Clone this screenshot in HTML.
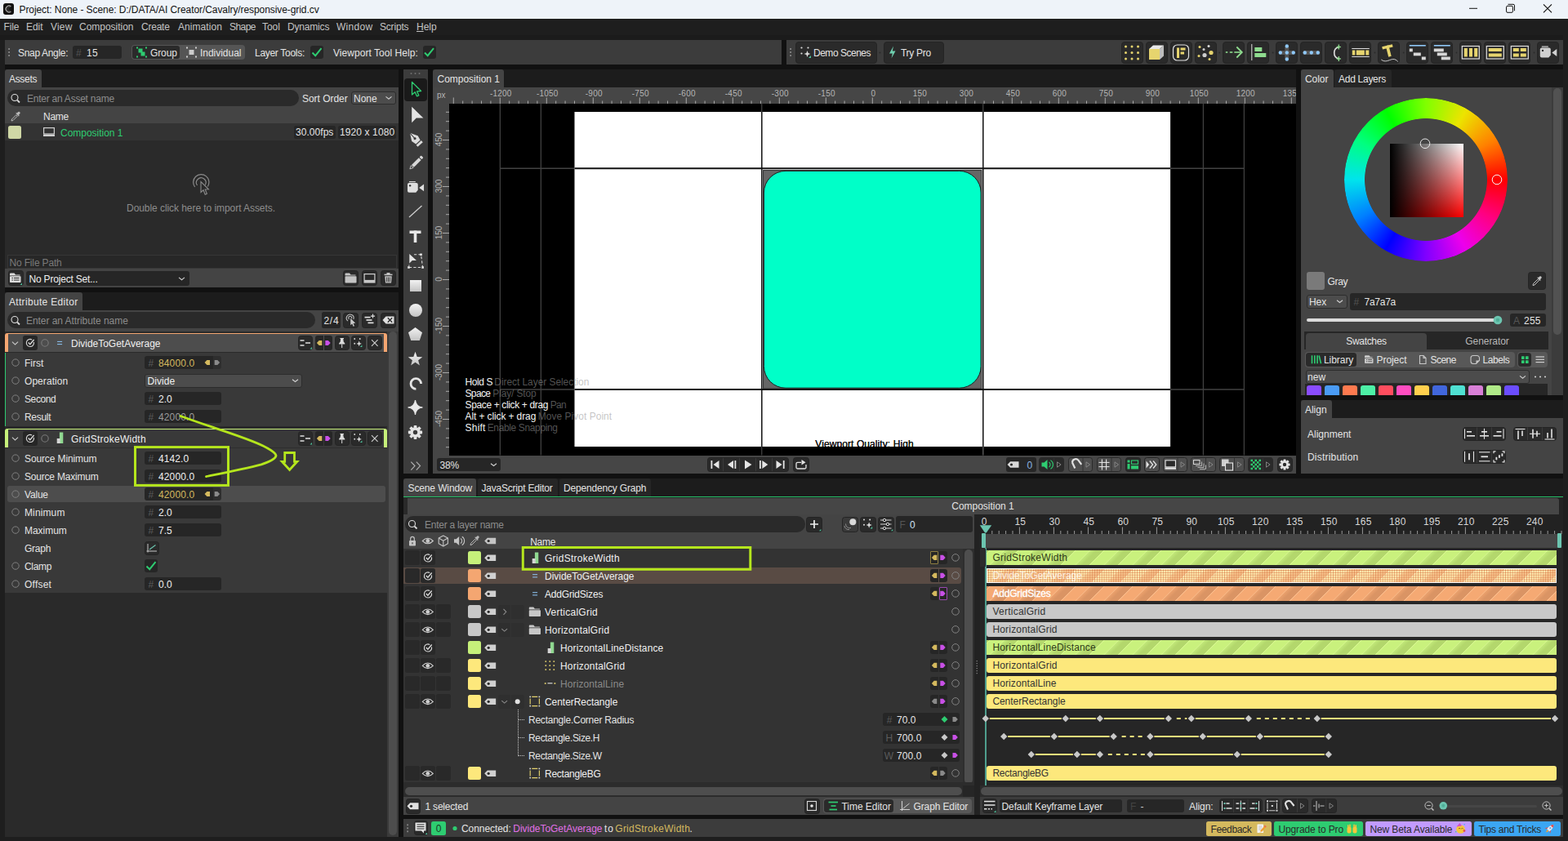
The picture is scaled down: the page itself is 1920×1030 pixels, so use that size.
<!DOCTYPE html>
<html lang="en"><head><meta charset="utf-8"><title>Cavalry - responsive-grid.cv</title>
<style>
html,body{margin:0;padding:0;background:#1e1e1e;}
body{width:1920px;height:1030px;position:relative;overflow:hidden;font-family:"Liberation Sans", sans-serif;font-size:12px;}
#root{position:absolute;left:0;top:0;width:1920px;height:1030px;overflow:hidden;}
#root div{position:absolute;box-sizing:border-box;}
.t{position:absolute;display:block;}
svg.ov{position:absolute;left:0;top:0;width:1920px;height:1030px;pointer-events:none;}
</style></head><body><div id="root">
<div style="left:0px;top:0px;width:1920px;height:23px;background:#eef3f9;"></div>
<span class="t" style="top:4.5px;line-height:14px;font-size:12px;color:#111;white-space:nowrap;letter-spacing:-0.078px;left:23.5px;">Project: None - Scene: D:/DATA/AI Creator/Cavalry/responsive-grid.cv</span>
<div style="left:0px;top:23px;width:1920px;height:26px;background:#1e1e1e;"></div>
<div style="left:0px;top:43px;width:1920px;height:6px;background:#1b1b1b;"></div>
<span class="t" style="top:26.0px;line-height:14px;font-size:12px;color:#c4c4c4;white-space:nowrap;letter-spacing:-0.174px;left:4.5px;">File</span>
<span class="t" style="top:26.0px;line-height:14px;font-size:12px;color:#c4c4c4;white-space:nowrap;letter-spacing:-0.065px;left:32px;">Edit</span>
<span class="t" style="top:26.0px;line-height:14px;font-size:12px;color:#c4c4c4;white-space:nowrap;letter-spacing:0.173px;left:62px;">View</span>
<span class="t" style="top:26.0px;line-height:14px;font-size:12px;color:#c4c4c4;white-space:nowrap;letter-spacing:-0.018px;left:97px;">Composition</span>
<span class="t" style="top:26.0px;line-height:14px;font-size:12px;color:#c4c4c4;white-space:nowrap;letter-spacing:-0.224px;left:173px;">Create</span>
<span class="t" style="top:26.0px;line-height:14px;font-size:12px;color:#c4c4c4;white-space:nowrap;letter-spacing:0.059px;left:218px;">Animation</span>
<span class="t" style="top:26.0px;line-height:14px;font-size:12px;color:#c4c4c4;white-space:nowrap;letter-spacing:-0.561px;left:281px;">Shape</span>
<span class="t" style="top:26.0px;line-height:14px;font-size:12px;color:#c4c4c4;white-space:nowrap;letter-spacing:-0.036px;left:321px;">Tool</span>
<span class="t" style="top:26.0px;line-height:14px;font-size:12px;color:#c4c4c4;white-space:nowrap;letter-spacing:-0.183px;left:352px;">Dynamics</span>
<span class="t" style="top:26.0px;line-height:14px;font-size:12px;color:#c4c4c4;white-space:nowrap;letter-spacing:0.292px;left:412px;">Window</span>
<span class="t" style="top:26.0px;line-height:14px;font-size:12px;color:#c4c4c4;white-space:nowrap;letter-spacing:-0.192px;left:465px;">Scripts</span>
<span class="t" style="top:26.0px;line-height:14px;font-size:12px;color:#c4c4c4;white-space:nowrap;letter-spacing:-0.007px;left:510px;"><u>H</u>elp</span>
<div style="left:6px;top:79px;width:1908px;height:946px;background:#111111;"></div>
<div style="left:6px;top:49px;width:951px;height:30px;background:#3c3c3c;"></div>
<div style="left:957px;top:49px;width:6px;height:30px;background:#111111;"></div>
<span class="t" style="top:57.8px;line-height:14px;font-size:12px;color:#e4e4e4;white-space:nowrap;letter-spacing:-0.322px;left:22px;">Snap Angle:</span>
<div style="left:89px;top:56px;width:60px;height:16px;background:#262626;border-radius:3px;"></div>
<span class="t" style="top:57.8px;line-height:14px;font-size:12px;color:#555;white-space:nowrap;left:93px;">#</span>
<span class="t" style="top:57.8px;line-height:14px;font-size:12px;color:#e4e4e4;white-space:nowrap;letter-spacing:0.226px;left:106px;">15</span>
<div style="left:161px;top:55px;width:139px;height:18px;background:#555;border-radius:4px;"></div>
<div style="left:162px;top:56px;width:58px;height:16px;background:#2a2a2a;border-radius:3px;"></div>
<span class="t" style="top:57.8px;line-height:14px;font-size:12px;color:#e4e4e4;white-space:nowrap;letter-spacing:-0.122px;left:184px;">Group</span>
<span class="t" style="top:57.8px;line-height:14px;font-size:12px;color:#e4e4e4;white-space:nowrap;letter-spacing:-0.028px;left:245px;">Individual</span>
<span class="t" style="top:57.8px;line-height:14px;font-size:12px;color:#e4e4e4;white-space:nowrap;letter-spacing:-0.294px;left:312px;">Layer Tools:</span>
<div style="left:380px;top:56px;width:16px;height:16px;background:#262626;border-radius:3px;"></div>
<span class="t" style="top:57.8px;line-height:14px;font-size:12px;color:#e4e4e4;white-space:nowrap;letter-spacing:0.043px;left:408px;">Viewport Tool Help:</span>
<div style="left:517.5px;top:56px;width:16.0px;height:16px;background:#262626;border-radius:3px;"></div>
<div style="left:963px;top:49px;width:951px;height:30px;background:#3c3c3c;"></div>
<div style="left:974px;top:51px;width:99.5px;height:26.5px;background:#2a2a2a;border-radius:4px;border:1px solid #242424;"></div>
<span class="t" style="top:57.8px;line-height:14px;font-size:12px;color:#e4e4e4;white-space:nowrap;letter-spacing:-0.486px;left:996px;">Demo Scenes</span>
<div style="left:1081.5px;top:51px;width:74.5px;height:26.5px;background:#2a2a2a;border-radius:4px;border:1px solid #242424;"></div>
<span class="t" style="top:57.8px;line-height:14px;font-size:12px;color:#e4e4e4;white-space:nowrap;letter-spacing:-0.292px;left:1103px;">Try Pro</span>
<div style="left:1372.5px;top:51px;width:27.0px;height:26.5px;background:#2a2a2a;border-radius:4px;border:1px solid #242424;"></div>
<div style="left:1402.5px;top:51px;width:27.0px;height:26.5px;background:#2a2a2a;border-radius:4px;border:1px solid #242424;"></div>
<div style="left:1432.5px;top:51px;width:27.0px;height:26.5px;background:#2a2a2a;border-radius:4px;border:1px solid #242424;"></div>
<div style="left:1462.5px;top:51px;width:27.0px;height:26.5px;background:#2a2a2a;border-radius:4px;border:1px solid #242424;"></div>
<div style="left:1497.3px;top:51px;width:27.0px;height:26.5px;background:#2a2a2a;border-radius:4px;border:1px solid #242424;"></div>
<div style="left:1527.3px;top:51px;width:27.0px;height:26.5px;background:#2a2a2a;border-radius:4px;border:1px solid #242424;"></div>
<div style="left:1562.3px;top:51px;width:27.0px;height:26.5px;background:#2a2a2a;border-radius:4px;border:1px solid #242424;"></div>
<div style="left:1592.3px;top:51px;width:27.0px;height:26.5px;background:#2a2a2a;border-radius:4px;border:1px solid #242424;"></div>
<div style="left:1622.3px;top:51px;width:27.0px;height:26.5px;background:#2a2a2a;border-radius:4px;border:1px solid #242424;"></div>
<div style="left:1652.3px;top:51px;width:27.0px;height:26.5px;background:#2a2a2a;border-radius:4px;border:1px solid #242424;"></div>
<div style="left:1687.3px;top:51px;width:27.0px;height:26.5px;background:#2a2a2a;border-radius:4px;border:1px solid #242424;"></div>
<div style="left:1722.3px;top:51px;width:27.0px;height:26.5px;background:#2a2a2a;border-radius:4px;border:1px solid #242424;"></div>
<div style="left:1752.3px;top:51px;width:27.0px;height:26.5px;background:#2a2a2a;border-radius:4px;border:1px solid #242424;"></div>
<div style="left:1787.3px;top:51px;width:27.0px;height:26.5px;background:#2a2a2a;border-radius:4px;border:1px solid #242424;"></div>
<div style="left:1817.3px;top:51px;width:27.0px;height:26.5px;background:#2a2a2a;border-radius:4px;border:1px solid #242424;"></div>
<div style="left:1847.3px;top:51px;width:27.0px;height:26.5px;background:#2a2a2a;border-radius:4px;border:1px solid #242424;"></div>
<div style="left:1882.3px;top:51px;width:27.0px;height:26.5px;background:#2a2a2a;border-radius:4px;border:1px solid #242424;"></div>
<div style="left:6px;top:85px;width:482px;height:22px;background:#1c1c1c;"></div>
<div style="left:6px;top:85px;width:45px;height:23px;background:#444444;border-radius:3px 3px 0 0;"></div>
<span class="t" style="top:89.5px;line-height:14px;font-size:12px;color:#e4e4e4;white-space:nowrap;letter-spacing:-0.324px;left:11px;">Assets</span>
<div style="left:6px;top:107px;width:482px;height:245px;background:#2a2a2a;"></div>
<div style="left:6px;top:107px;width:482px;height:44px;background:#444444;"></div>
<div style="left:9px;top:110px;width:357px;height:20px;background:#2a2a2a;border-radius:10px;"></div>
<span class="t" style="top:113.5px;line-height:14px;font-size:12px;color:#8c8c8c;white-space:nowrap;letter-spacing:-0.241px;left:33px;">Enter an Asset name</span>
<span class="t" style="top:113.5px;line-height:14px;font-size:12px;color:#e4e4e4;white-space:nowrap;letter-spacing:-0.035px;left:370px;">Sort Order</span>
<div style="left:430px;top:111.5px;width:54.5px;height:16.5px;background:#4c4c4c;border-radius:3px;border:1px solid #2c2c2c;"></div>
<span class="t" style="top:113.5px;line-height:14px;font-size:12px;color:#e4e4e4;white-space:nowrap;letter-spacing:-0.026px;left:433px;">None</span>
<span class="t" style="top:135.5px;line-height:14px;font-size:12px;color:#e4e4e4;white-space:nowrap;letter-spacing:-0.277px;left:53px;">Name</span>
<div style="left:6px;top:151px;width:482px;height:21.4px;background:#333333;"></div>
<div style="left:10px;top:154px;width:16px;height:16px;background:#d0d8a6;border-radius:2.5px;"></div>
<span class="t" style="top:155.5px;line-height:14px;font-size:12px;color:#2ecc71;white-space:nowrap;letter-spacing:-0.019px;left:74px;">Composition 1</span>
<div style="left:360px;top:153.5px;width:50.5px;height:16.5px;background:#262626;border-radius:2.5px;"></div>
<span class="t" style="top:155.0px;line-height:14px;font-size:12px;color:#e4e4e4;white-space:nowrap;letter-spacing:0.047px;left:362px;">30.00fps</span>
<div style="left:414px;top:153.5px;width:70.5px;height:16.5px;background:#262626;border-radius:2.5px;"></div>
<span class="t" style="top:155.0px;line-height:14px;font-size:12px;color:#e4e4e4;white-space:nowrap;letter-spacing:0.107px;left:416px;">1920 x 1080</span>
<span class="t" style="top:248.0px;line-height:14px;font-size:12px;color:#8c8c8c;white-space:nowrap;letter-spacing:-0.062px;left:46px;width:400px;text-align:center;">Double click here to import Assets.</span>
<div style="left:9px;top:312px;width:476.5px;height:17px;background:#272727;border:1px solid #363636;"></div>
<span class="t" style="top:314.5px;line-height:14px;font-size:12px;color:#7a7a7a;white-space:nowrap;letter-spacing:-0.159px;left:11.5px;">No File Path</span>
<div style="left:6px;top:329px;width:482px;height:23px;background:#444444;"></div>
<div style="left:9.5px;top:331px;width:19.0px;height:19px;background:#2a2a2a;border-radius:3.5px;border:1px solid #242424;"></div>
<div style="left:32px;top:332px;width:199.5px;height:17.5px;background:#262626;border-radius:3px;"></div>
<span class="t" style="top:334.5px;line-height:14px;font-size:12px;color:#f0f0f0;white-space:nowrap;letter-spacing:-0.192px;left:35.5px;">No Project Set...</span>
<div style="left:420px;top:331px;width:19px;height:19px;background:#2a2a2a;border-radius:3.5px;border:1px solid #242424;"></div>
<div style="left:443px;top:331px;width:19px;height:19px;background:#2a2a2a;border-radius:3.5px;border:1px solid #242424;"></div>
<div style="left:466px;top:331px;width:19px;height:19px;background:#2a2a2a;border-radius:3.5px;border:1px solid #242424;"></div>
<div style="left:6px;top:358px;width:482px;height:22px;background:#1c1c1c;"></div>
<div style="left:6px;top:358px;width:94.5px;height:23px;background:#444444;border-radius:3px 3px 0 0;"></div>
<span class="t" style="top:362.5px;line-height:14px;font-size:12px;color:#e4e4e4;white-space:nowrap;letter-spacing:0.317px;left:11px;">Attribute Editor</span>
<div style="left:6px;top:380px;width:482px;height:645px;background:#2a2a2a;"></div>
<div style="left:6px;top:380px;width:482px;height:26px;background:#444444;"></div>
<div style="left:9px;top:382px;width:377px;height:20px;background:#2a2a2a;border-radius:10px;"></div>
<span class="t" style="top:385.5px;line-height:14px;font-size:12px;color:#8c8c8c;white-space:nowrap;letter-spacing:-0.056px;left:32px;">Enter an Attribute name</span>
<div style="left:394px;top:382px;width:22.5px;height:19.5px;background:#262626;border-radius:2.5px;"></div>
<span class="t" style="top:385.5px;line-height:14px;font-size:12px;color:#e4e4e4;white-space:nowrap;letter-spacing:0.7px;left:396.5px;">2/4</span>
<div style="left:420px;top:382.5px;width:19px;height:19.0px;background:#2a2a2a;border-radius:3.5px;border:1px solid #242424;"></div>
<div style="left:443px;top:382.5px;width:19px;height:19.0px;background:#2a2a2a;border-radius:3.5px;border:1px solid #242424;"></div>
<div style="left:466px;top:382.5px;width:19px;height:19.0px;background:#2a2a2a;border-radius:3.5px;border:1px solid #242424;"></div>
<div style="left:474px;top:406px;width:14px;height:619px;background:#3a3a3a;"></div>
<div style="left:475.5px;top:405.5px;width:10.0px;height:617.5px;background:#4d4d4d;border-radius:5px;"></div>
<div style="left:6px;top:408px;width:468px;height:23px;background:#4d4d4d;border-radius:3px 3px 0 0;border-left:4px solid #f4a671;border-right:4px solid #f4a671;border-top:1px solid #f4a671;"></div>
<div style="left:28px;top:411px;width:18px;height:17.5px;background:#262626;border-radius:3px;"></div>
<span class="t" style="top:414.2px;line-height:14px;font-size:12px;color:#f0f0f0;white-space:nowrap;letter-spacing:-0.019px;left:87px;">DivideToGetAverage</span>
<div style="left:365px;top:411px;width:18px;height:17.5px;background:#2a2a2a;border-radius:3.5px;border:1px solid #242424;"></div>
<div style="left:386px;top:411px;width:10px;height:17.5px;background:#262626;border-radius:3px 0 0 3px;"></div>
<div style="left:396.5px;top:411px;width:10.0px;height:17.5px;background:#262626;border-radius:0 3px 3px 0;"></div>
<div style="left:410px;top:411px;width:17.5px;height:17.5px;background:#2a2a2a;border-radius:3.5px;border:1px solid #242424;"></div>
<div style="left:430px;top:411px;width:17.5px;height:17.5px;background:#2a2a2a;border-radius:3.5px;border:1px solid #242424;"></div>
<div style="left:450px;top:411px;width:17.5px;height:17.5px;background:#2a2a2a;border-radius:3.5px;border:1px solid #242424;"></div>
<div style="left:6px;top:431.5px;width:468px;height:90.0px;background:#393939;"></div>
<div style="left:6px;top:431.5px;width:1.3px;height:90.0px;background:#2ecc71;"></div>
<span class="t" style="top:437.7px;line-height:14px;font-size:12px;color:#e4e4e4;white-space:nowrap;letter-spacing:-0.009px;left:30px;">First</span>
<div style="left:177px;top:436px;width:83.8px;height:16px;background:#262626;border-radius:3px 0 0 3px;"></div>
<div style="left:260.8px;top:436px;width:10.2px;height:16px;background:#2e2e2e;border-radius:0 3px 3px 0;"></div>
<span class="t" style="top:437.8px;line-height:14px;font-size:12px;color:#5c5c5c;white-space:nowrap;left:181.5px;">#</span>
<span class="t" style="top:437.8px;line-height:14px;font-size:12px;color:#d4b95e;white-space:nowrap;letter-spacing:0.119px;left:194px;">84000.0</span>
<span class="t" style="top:459.7px;line-height:14px;font-size:12px;color:#e4e4e4;white-space:nowrap;letter-spacing:0.055px;left:30px;">Operation</span>
<div style="left:177px;top:458px;width:193px;height:16.5px;background:#4c4c4c;border-radius:3px;border:1px solid #2c2c2c;"></div>
<span class="t" style="top:459.5px;line-height:14px;font-size:12px;color:#f0f0f0;white-space:nowrap;letter-spacing:0.061px;left:180.5px;">Divide</span>
<span class="t" style="top:481.7px;line-height:14px;font-size:12px;color:#e4e4e4;white-space:nowrap;letter-spacing:-0.388px;left:30px;">Second</span>
<div style="left:177px;top:480px;width:93.5px;height:16px;background:#262626;border-radius:3px;"></div>
<span class="t" style="top:481.8px;line-height:14px;font-size:12px;color:#5c5c5c;white-space:nowrap;left:181.5px;">#</span>
<span class="t" style="top:481.8px;line-height:14px;font-size:12px;color:#f0f0f0;white-space:nowrap;letter-spacing:-0.024px;left:194px;">2.0</span>
<span class="t" style="top:503.7px;line-height:14px;font-size:12px;color:#e4e4e4;white-space:nowrap;letter-spacing:-0.299px;left:30px;">Result</span>
<div style="left:177px;top:502px;width:93.5px;height:16px;background:#262626;border-radius:3px;"></div>
<span class="t" style="top:503.8px;line-height:14px;font-size:12px;color:#5c5c5c;white-space:nowrap;left:181.5px;">#</span>
<span class="t" style="top:503.8px;line-height:14px;font-size:12px;color:#9a9a9a;white-space:nowrap;letter-spacing:0.119px;left:194px;">42000.0</span>
<div style="left:6px;top:525px;width:468px;height:23px;background:#393939;border-radius:3px 3px 0 0;border-left:4px solid #c6f07a;border-right:4px solid #c6f07a;border-top:1px solid #c6f07a;"></div>
<div style="left:28px;top:528px;width:18px;height:17.5px;background:#262626;border-radius:3px;"></div>
<span class="t" style="top:531.2px;line-height:14px;font-size:12px;color:#f0f0f0;white-space:nowrap;letter-spacing:0.256px;left:87px;">GridStrokeWidth</span>
<div style="left:365px;top:528px;width:18px;height:17.5px;background:#2a2a2a;border-radius:3.5px;border:1px solid #242424;"></div>
<div style="left:386px;top:528px;width:10px;height:17.5px;background:#262626;border-radius:3px 0 0 3px;"></div>
<div style="left:396.5px;top:528px;width:10.0px;height:17.5px;background:#262626;border-radius:0 3px 3px 0;"></div>
<div style="left:410px;top:528px;width:17.5px;height:17.5px;background:#2a2a2a;border-radius:3.5px;border:1px solid #242424;"></div>
<div style="left:430px;top:528px;width:17.5px;height:17.5px;background:#2a2a2a;border-radius:3.5px;border:1px solid #242424;"></div>
<div style="left:450px;top:528px;width:17.5px;height:17.5px;background:#2a2a2a;border-radius:3.5px;border:1px solid #242424;"></div>
<div style="left:6px;top:548px;width:468px;height:1px;background:#2e2e2e;"></div>
<div style="left:6px;top:549px;width:468px;height:177px;background:#393939;"></div>
<div style="left:9px;top:595px;width:463px;height:20px;background:#4d4d4d;border-radius:3px;"></div>
<span class="t" style="top:554.7px;line-height:14px;font-size:12px;color:#e4e4e4;white-space:nowrap;letter-spacing:-0.119px;left:30px;">Source Minimum</span>
<div style="left:177px;top:553px;width:93.5px;height:16px;background:#262626;border-radius:3px;"></div>
<span class="t" style="top:554.8px;line-height:14px;font-size:12px;color:#5c5c5c;white-space:nowrap;left:181.5px;">#</span>
<span class="t" style="top:554.8px;line-height:14px;font-size:12px;color:#f0f0f0;white-space:nowrap;letter-spacing:0.101px;left:194px;">4142.0</span>
<span class="t" style="top:576.7px;line-height:14px;font-size:12px;color:#e4e4e4;white-space:nowrap;letter-spacing:-0.196px;left:30px;">Source Maximum</span>
<div style="left:177px;top:575px;width:93.5px;height:16px;background:#262626;border-radius:3px;"></div>
<span class="t" style="top:576.8px;line-height:14px;font-size:12px;color:#5c5c5c;white-space:nowrap;left:181.5px;">#</span>
<span class="t" style="top:576.8px;line-height:14px;font-size:12px;color:#f0f0f0;white-space:nowrap;letter-spacing:0.119px;left:194px;">42000.0</span>
<span class="t" style="top:598.7px;line-height:14px;font-size:12px;color:#e4e4e4;white-space:nowrap;letter-spacing:-0.19px;left:30px;">Value</span>
<div style="left:177px;top:597px;width:83.8px;height:16px;background:#262626;border-radius:3px 0 0 3px;"></div>
<div style="left:260.8px;top:597px;width:10.2px;height:16px;background:#2e2e2e;border-radius:0 3px 3px 0;"></div>
<span class="t" style="top:598.8px;line-height:14px;font-size:12px;color:#5c5c5c;white-space:nowrap;left:181.5px;">#</span>
<span class="t" style="top:598.8px;line-height:14px;font-size:12px;color:#d4b95e;white-space:nowrap;letter-spacing:0.119px;left:194px;">42000.0</span>
<span class="t" style="top:620.7px;line-height:14px;font-size:12px;color:#e4e4e4;white-space:nowrap;letter-spacing:0.121px;left:30px;">Minimum</span>
<div style="left:177px;top:619px;width:93.5px;height:16px;background:#262626;border-radius:3px;"></div>
<span class="t" style="top:620.8px;line-height:14px;font-size:12px;color:#5c5c5c;white-space:nowrap;left:181.5px;">#</span>
<span class="t" style="top:620.8px;line-height:14px;font-size:12px;color:#f0f0f0;white-space:nowrap;letter-spacing:-0.024px;left:194px;">2.0</span>
<span class="t" style="top:642.7px;line-height:14px;font-size:12px;color:#e4e4e4;white-space:nowrap;letter-spacing:-0.033px;left:30px;">Maximum</span>
<div style="left:177px;top:641px;width:93.5px;height:16px;background:#262626;border-radius:3px;"></div>
<span class="t" style="top:642.8px;line-height:14px;font-size:12px;color:#5c5c5c;white-space:nowrap;left:181.5px;">#</span>
<span class="t" style="top:642.8px;line-height:14px;font-size:12px;color:#f0f0f0;white-space:nowrap;letter-spacing:-0.024px;left:194px;">7.5</span>
<span class="t" style="top:664.7px;line-height:14px;font-size:12px;color:#e4e4e4;white-space:nowrap;letter-spacing:-0.252px;left:30px;">Graph</span>
<div style="left:177px;top:662.5px;width:17.5px;height:17.5px;background:#2a2a2a;border-radius:3.5px;border:1px solid #242424;"></div>
<span class="t" style="top:686.7px;line-height:14px;font-size:12px;color:#e4e4e4;white-space:nowrap;letter-spacing:-0.31px;left:30px;">Clamp</span>
<div style="left:177px;top:685px;width:16px;height:16px;background:#262626;border-radius:3px;"></div>
<span class="t" style="top:708.7px;line-height:14px;font-size:12px;color:#e4e4e4;white-space:nowrap;letter-spacing:0.219px;left:30px;">Offset</span>
<div style="left:177px;top:707px;width:93.5px;height:16px;background:#262626;border-radius:3px;"></div>
<span class="t" style="top:708.8px;line-height:14px;font-size:12px;color:#5c5c5c;white-space:nowrap;left:181.5px;">#</span>
<span class="t" style="top:708.8px;line-height:14px;font-size:12px;color:#f0f0f0;white-space:nowrap;letter-spacing:-0.024px;left:194px;">0.0</span>
<div style="left:494px;top:85px;width:30px;height:495px;background:#3c3c3c;"></div>
<div style="left:494.8px;top:96px;width:27.8px;height:27.8px;background:#1a1a1a;border-radius:4px;"></div>
<div style="left:530px;top:85px;width:1057px;height:22px;background:#1c1c1c;"></div>
<div style="left:530px;top:85px;width:86.5px;height:23px;background:#444444;border-radius:3px 3px 0 0;"></div>
<span class="t" style="top:89.5px;line-height:14px;font-size:12px;color:#e4e4e4;white-space:nowrap;letter-spacing:-0.019px;left:535.5px;">Composition 1</span>
<div style="left:530px;top:107px;width:1057px;height:473px;background:#464646;"></div>
<div style="left:550px;top:127px;width:1037px;height:430.5px;background:#000;"></div>
<svg class="ov" viewBox="0 0 1920 1030" width="1920" height="1030"><defs><clipPath id="vp"><rect x="550" y="127" width="1037" height="430.5"/></clipPath></defs><g clip-path="url(#vp)"><line x1="612.3" y1="127" x2="612.3" y2="558" stroke="#525252" stroke-width="1"/><line x1="662.3" y1="127" x2="662.3" y2="558" stroke="#525252" stroke-width="1"/><line x1="932.8" y1="127" x2="932.8" y2="558" stroke="#525252" stroke-width="1"/><line x1="1203.8" y1="127" x2="1203.8" y2="558" stroke="#525252" stroke-width="1"/><line x1="1473.3" y1="127" x2="1473.3" y2="558" stroke="#525252" stroke-width="1"/><line x1="1523.3" y1="127" x2="1523.3" y2="558" stroke="#525252" stroke-width="1"/><line x1="612.3" y1="206.3" x2="1523.3" y2="206.3" stroke="#424242" stroke-width="1.5"/><line x1="612.3" y1="477.0" x2="1523.3" y2="477.0" stroke="#424242" stroke-width="1.5"/><rect x="703.5" y="137" width="729.6" height="410" fill="#fff"/><line x1="932.8" y1="137" x2="932.8" y2="547" stroke="#1c1c1c" stroke-width="1.6"/><line x1="1203.8" y1="137" x2="1203.8" y2="547" stroke="#1c1c1c" stroke-width="1.6"/><line x1="703.5" y1="206.3" x2="1433.1" y2="206.3" stroke="#111" stroke-width="2"/><line x1="703.5" y1="477.0" x2="1433.1" y2="477.0" stroke="#111" stroke-width="2"/><rect x="934.6" y="208.6" width="267.4" height="267.4" fill="#666" stroke="#2a2a2a" stroke-width="1"/><rect x="935.4" y="209.4" width="265.8" height="265.8" rx="26.6" fill="#00ffc8" stroke="#1c1c1c" stroke-width="1"/></g></svg>
<span class="t" style="top:536.5px;line-height:14px;font-size:12px;color:#111;white-space:nowrap;letter-spacing:0.083px;left:858.5px;width:400px;text-align:center;text-shadow:0 0 0 #000;">Viewport Quality: High</span>
<div style="left:990px;top:547px;width:140px;height:10.5px;background:#000;"></div>
<svg class="ov" viewBox="0 0 1920 1030" width="1920" height="1030"><line x1="1203.8" y1="547" x2="1203.8" y2="557.5" stroke="#5a5a5a"/></svg>
<span class="t" style="top:108.7px;line-height:12px;font-size:10px;color:#b4b4b4;white-space:nowrap;letter-spacing:0.223px;left:413.29999999999995px;width:400px;text-align:center;clip-path:inset(0 0 0 0);">-1200</span>
<span class="t" style="top:108.7px;line-height:12px;font-size:10px;color:#b4b4b4;white-space:nowrap;letter-spacing:0.223px;left:470.29999999999995px;width:400px;text-align:center;clip-path:inset(0 0 0 0);">-1050</span>
<span class="t" style="top:108.7px;line-height:12px;font-size:10px;color:#b4b4b4;white-space:nowrap;letter-spacing:0.231px;left:527.3px;width:400px;text-align:center;clip-path:inset(0 0 0 0);">-900</span>
<span class="t" style="top:108.7px;line-height:12px;font-size:10px;color:#b4b4b4;white-space:nowrap;letter-spacing:0.231px;left:584.3px;width:400px;text-align:center;clip-path:inset(0 0 0 0);">-750</span>
<span class="t" style="top:108.7px;line-height:12px;font-size:10px;color:#b4b4b4;white-space:nowrap;letter-spacing:0.231px;left:641.3px;width:400px;text-align:center;clip-path:inset(0 0 0 0);">-600</span>
<span class="t" style="top:108.7px;line-height:12px;font-size:10px;color:#b4b4b4;white-space:nowrap;letter-spacing:0.231px;left:698.3px;width:400px;text-align:center;clip-path:inset(0 0 0 0);">-450</span>
<span class="t" style="top:108.7px;line-height:12px;font-size:10px;color:#b4b4b4;white-space:nowrap;letter-spacing:0.231px;left:755.3px;width:400px;text-align:center;clip-path:inset(0 0 0 0);">-300</span>
<span class="t" style="top:108.7px;line-height:12px;font-size:10px;color:#b4b4b4;white-space:nowrap;letter-spacing:0.231px;left:812.3px;width:400px;text-align:center;clip-path:inset(0 0 0 0);">-150</span>
<span class="t" style="top:108.7px;line-height:12px;font-size:10px;color:#b4b4b4;white-space:nowrap;left:869.3px;width:400px;text-align:center;clip-path:inset(0 0 0 0);">0</span>
<span class="t" style="top:108.7px;line-height:12px;font-size:10px;color:#b4b4b4;white-space:nowrap;letter-spacing:0.188px;left:926.3px;width:400px;text-align:center;clip-path:inset(0 0 0 0);">150</span>
<span class="t" style="top:108.7px;line-height:12px;font-size:10px;color:#b4b4b4;white-space:nowrap;letter-spacing:0.188px;left:983.3px;width:400px;text-align:center;clip-path:inset(0 0 0 0);">300</span>
<span class="t" style="top:108.7px;line-height:12px;font-size:10px;color:#b4b4b4;white-space:nowrap;letter-spacing:0.188px;left:1040.3px;width:400px;text-align:center;clip-path:inset(0 0 0 0);">450</span>
<span class="t" style="top:108.7px;line-height:12px;font-size:10px;color:#b4b4b4;white-space:nowrap;letter-spacing:0.188px;left:1097.3px;width:400px;text-align:center;clip-path:inset(0 0 0 0);">600</span>
<span class="t" style="top:108.7px;line-height:12px;font-size:10px;color:#b4b4b4;white-space:nowrap;letter-spacing:0.188px;left:1154.3px;width:400px;text-align:center;clip-path:inset(0 0 0 0);">750</span>
<span class="t" style="top:108.7px;line-height:12px;font-size:10px;color:#b4b4b4;white-space:nowrap;letter-spacing:0.188px;left:1211.3px;width:400px;text-align:center;clip-path:inset(0 0 0 0);">900</span>
<span class="t" style="top:108.7px;line-height:12px;font-size:10px;color:#b4b4b4;white-space:nowrap;letter-spacing:0.188px;left:1268.3px;width:400px;text-align:center;clip-path:inset(0 0 0 0);">1050</span>
<span class="t" style="top:108.7px;line-height:12px;font-size:10px;color:#b4b4b4;white-space:nowrap;letter-spacing:0.188px;left:1325.3px;width:400px;text-align:center;clip-path:inset(0 0 0 0);">1200</span>
<span class="t" style="top:108.7px;line-height:12px;font-size:10px;color:#b4b4b4;white-space:nowrap;letter-spacing:0.188px;left:1382.3px;width:400px;text-align:center;clip-path:inset(0 0 0 0);">1350</span>
<span class="t" style="top:110.5px;line-height:12px;font-size:10px;color:#b4b4b4;white-space:nowrap;letter-spacing:-0.128px;left:535px;">px</span>
<div style="left:1587px;top:107px;width:6px;height:23px;background:#111111;"></div>
<span class="t" style="left:508px;top:164.5px;width:60px;height:12px;line-height:12px;font-size:10px;color:#b4b4b4;text-align:center;transform:rotate(-90deg);white-space:nowrap;">450</span>
<span class="t" style="left:508px;top:221.5px;width:60px;height:12px;line-height:12px;font-size:10px;color:#b4b4b4;text-align:center;transform:rotate(-90deg);white-space:nowrap;">300</span>
<span class="t" style="left:508px;top:278.5px;width:60px;height:12px;line-height:12px;font-size:10px;color:#b4b4b4;text-align:center;transform:rotate(-90deg);white-space:nowrap;">150</span>
<span class="t" style="left:508px;top:335.5px;width:60px;height:12px;line-height:12px;font-size:10px;color:#b4b4b4;text-align:center;transform:rotate(-90deg);white-space:nowrap;">0</span>
<span class="t" style="left:508px;top:392.5px;width:60px;height:12px;line-height:12px;font-size:10px;color:#b4b4b4;text-align:center;transform:rotate(-90deg);white-space:nowrap;">-150</span>
<span class="t" style="left:508px;top:449.5px;width:60px;height:12px;line-height:12px;font-size:10px;color:#b4b4b4;text-align:center;transform:rotate(-90deg);white-space:nowrap;">-300</span>
<span class="t" style="left:508px;top:506.5px;width:60px;height:12px;line-height:12px;font-size:10px;color:#b4b4b4;text-align:center;transform:rotate(-90deg);white-space:nowrap;">-450</span>
<span class="t" style="top:460.5px;line-height:14px;font-size:12px;color:#f4f4f4;white-space:nowrap;letter-spacing:-0.383px;left:569.5px;">Hold S</span>
<span class="t" style="top:460.5px;line-height:14px;font-size:12px;color:rgba(150,150,150,0.56);white-space:nowrap;letter-spacing:-0.065px;left:605.3px;">Direct Layer Selection</span>
<span class="t" style="top:474.5px;line-height:14px;font-size:12px;color:#f4f4f4;white-space:nowrap;letter-spacing:-0.629px;left:569.5px;">Space</span>
<span class="t" style="top:474.5px;line-height:14px;font-size:12px;color:rgba(150,150,150,0.56);white-space:nowrap;letter-spacing:-0.152px;left:603.3px;">Play/ Stop</span>
<span class="t" style="top:488.5px;line-height:14px;font-size:12px;color:#f4f4f4;white-space:nowrap;letter-spacing:-0.359px;left:569.5px;">Space + click + drag</span>
<span class="t" style="top:488.5px;line-height:14px;font-size:12px;color:rgba(150,150,150,0.56);white-space:nowrap;letter-spacing:-0.622px;left:673.7px;">Pan</span>
<span class="t" style="top:502.5px;line-height:14px;font-size:12px;color:#f4f4f4;white-space:nowrap;letter-spacing:-0.112px;left:569.5px;">Alt + click + drag</span>
<span class="t" style="top:502.5px;line-height:14px;font-size:12px;color:rgba(150,150,150,0.56);white-space:nowrap;letter-spacing:0.026px;left:658.7px;">Move Pivot Point</span>
<span class="t" style="top:516.5px;line-height:14px;font-size:12px;color:#f4f4f4;white-space:nowrap;letter-spacing:0.225px;left:569.5px;">Shift</span>
<span class="t" style="top:516.5px;line-height:14px;font-size:12px;color:rgba(150,150,150,0.56);white-space:nowrap;letter-spacing:-0.364px;left:596.7px;">Enable Snapping</span>
<div style="left:535px;top:561px;width:77.5px;height:16px;background:#262626;border-radius:3px;"></div>
<span class="t" style="top:562.5px;line-height:14px;font-size:12px;color:#e4e4e4;white-space:nowrap;letter-spacing:-0.224px;left:538.5px;">38%</span>
<div style="left:866px;top:559.8px;width:100px;height:18.4px;background:#2a2a2a;border-radius:3.5px;border:1px solid #242424;"></div>
<div style="left:971px;top:559.8px;width:19.5px;height:18.4px;background:#2a2a2a;border-radius:3.5px;border:1px solid #242424;"></div>
<div style="left:1232px;top:560px;width:36.5px;height:18px;background:#262626;border-radius:3px;"></div>
<span class="t" style="top:562.5px;line-height:14px;font-size:12px;color:#8ab4e0;white-space:nowrap;left:1257.5px;">0</span>
<div style="left:1272px;top:560px;width:31px;height:18px;background:#2a2a2a;border-radius:3.5px;border:1px solid #2a2a2a;"></div>
<div style="left:1307.5px;top:560px;width:30.5px;height:18px;background:#4e4e4e;border-radius:3.5px;border:1px solid #2a2a2a;"></div>
<div style="left:1342.5px;top:560px;width:30.5px;height:18px;background:#4e4e4e;border-radius:3.5px;border:1px solid #2a2a2a;"></div>
<div style="left:1377.5px;top:560px;width:19.0px;height:18px;background:#2a2a2a;border-radius:3.5px;border:1px solid #242424;"></div>
<div style="left:1400.5px;top:560px;width:19.0px;height:18px;background:#4e4e4e;border-radius:3.5px;border:1px solid #242424;"></div>
<div style="left:1423.5px;top:560px;width:30.5px;height:18px;background:#4e4e4e;border-radius:3.5px;border:1px solid #2a2a2a;"></div>
<div style="left:1458px;top:560px;width:31px;height:18px;background:#4e4e4e;border-radius:3.5px;border:1px solid #2a2a2a;"></div>
<div style="left:1493px;top:560px;width:31px;height:18px;background:#4e4e4e;border-radius:3.5px;border:1px solid #2a2a2a;"></div>
<div style="left:1528px;top:560px;width:31px;height:18px;background:#2a2a2a;border-radius:3.5px;border:1px solid #2a2a2a;"></div>
<div style="left:1563.5px;top:560px;width:19.0px;height:18px;background:#2a2a2a;border-radius:3.5px;border:1px solid #242424;"></div>
<div style="left:1593px;top:85px;width:321px;height:22px;background:#1c1c1c;"></div>
<div style="left:1593px;top:85px;width:40px;height:23px;background:#444444;border-radius:3px 3px 0 0;"></div>
<span class="t" style="top:89.5px;line-height:14px;font-size:12px;color:#e4e4e4;white-space:nowrap;letter-spacing:-0.046px;left:1598px;">Color</span>
<div style="left:1634px;top:85px;width:69.5px;height:22px;background:#262626;border-radius:3px 3px 0 0;"></div>
<span class="t" style="top:89.5px;line-height:14px;font-size:12px;color:#e4e4e4;white-space:nowrap;letter-spacing:-0.275px;left:1639px;">Add Layers</span>
<div style="left:1593px;top:107px;width:321px;height:377px;background:#444444;"></div>
<div style="left:1900px;top:107px;width:14px;height:377px;background:#3c3c3c;"></div>
<div style="left:1902.2px;top:108px;width:9.8px;height:302px;background:#525252;border-radius:5px;"></div>
<div style="left:1646px;top:120px;width:200px;height:200px;border-radius:50%;background:conic-gradient(from 90deg,#ff0000 0deg,#ff0080 30deg,#ec00ec 60deg,#8000ff 90deg,#0000ff 120deg,#0080ff 150deg,#00e4ec 180deg,#00ff80 210deg,#00ff00 240deg,#80ff00 270deg,#ece400 300deg,#ff8000 330deg,#ff0000 360deg);-webkit-mask:radial-gradient(circle,transparent 74.5px,#000 75.3px);mask:radial-gradient(circle,transparent 74.5px,#000 75.3px);"></div>
<div style="left:1702px;top:176px;width:90px;height:90px;background:linear-gradient(to right,#000,rgba(0,0,0,0)),linear-gradient(to bottom,#fff,#f00);"></div>
<div style="left:1600px;top:333px;width:22px;height:22px;background:#7a7a7a;border-radius:3px;"></div>
<span class="t" style="top:337.5px;line-height:14px;font-size:12px;color:#e4e4e4;white-space:nowrap;letter-spacing:-0.308px;left:1625.5px;">Gray</span>
<div style="left:1871px;top:333px;width:22px;height:22px;background:#2a2a2a;border-radius:3.5px;border:1px solid #242424;"></div>
<div style="left:1600px;top:360.5px;width:49.5px;height:17.0px;background:#4c4c4c;border-radius:3px;border:1px solid #2c2c2c;"></div>
<span class="t" style="top:362.5px;line-height:14px;font-size:12px;color:#e4e4e4;white-space:nowrap;letter-spacing:-0.103px;left:1603px;">Hex</span>
<div style="left:1653px;top:358.5px;width:240px;height:21.5px;background:#262626;border-radius:3px;"></div>
<span class="t" style="top:362.5px;line-height:14px;font-size:12px;color:#555;white-space:nowrap;left:1657.5px;">#</span>
<span class="t" style="top:362.5px;line-height:14px;font-size:12px;color:#e4e4e4;white-space:nowrap;letter-spacing:-0.263px;left:1670.5px;">7a7a7a</span>
<div style="left:1600px;top:390px;width:234px;height:4px;background:#dcdcdc;border-radius:2px;"></div>
<div style="left:1849px;top:384px;width:44px;height:16px;background:#262626;border-radius:3px;"></div>
<span class="t" style="top:385.5px;line-height:14px;font-size:12px;color:#555;white-space:nowrap;left:1853px;">A</span>
<span class="t" style="top:385.5px;line-height:14px;font-size:12px;color:#e4e4e4;white-space:nowrap;letter-spacing:0.226px;left:1866px;">255</span>
<div style="left:1597px;top:406px;width:299px;height:22px;background:#262626;"></div>
<div style="left:1599px;top:408px;width:148px;height:20px;background:#444444;border-radius:4px 4px 0 0;"></div>
<span class="t" style="top:411.0px;line-height:14px;font-size:12px;color:#e4e4e4;white-space:nowrap;letter-spacing:-0.327px;left:1473px;width:400px;text-align:center;">Swatches</span>
<span class="t" style="top:411.0px;line-height:14px;font-size:12px;color:#b8b8b8;white-space:nowrap;letter-spacing:-0.084px;left:1621px;width:400px;text-align:center;">Generator</span>
<div style="left:1598px;top:431px;width:257px;height:18.5px;background:#585858;border-radius:4px;"></div>
<div style="left:1599px;top:432px;width:62px;height:16.5px;background:#2a2a2a;border-radius:3.5px;"></div>
<span class="t" style="top:434.0px;line-height:14px;font-size:12px;color:#e4e4e4;white-space:nowrap;letter-spacing:-0.06px;left:1621px;">Library</span>
<span class="t" style="top:434.0px;line-height:14px;font-size:12px;color:#e4e4e4;white-space:nowrap;letter-spacing:-0.054px;left:1685.5px;">Project</span>
<span class="t" style="top:434.0px;line-height:14px;font-size:12px;color:#e4e4e4;white-space:nowrap;letter-spacing:-0.554px;left:1751.5px;">Scene</span>
<span class="t" style="top:434.0px;line-height:14px;font-size:12px;color:#e4e4e4;white-space:nowrap;letter-spacing:-0.401px;left:1815.5px;">Labels</span>
<div style="left:1858px;top:431px;width:36.5px;height:18.5px;background:#585858;border-radius:4px;"></div>
<div style="left:1859px;top:432px;width:16px;height:16.5px;background:#2a2a2a;border-radius:3.5px;"></div>
<div style="left:1598.5px;top:453px;width:274.5px;height:16.5px;background:#4c4c4c;border-radius:3px;border:1px solid #2c2c2c;"></div>
<span class="t" style="top:454.5px;line-height:14px;font-size:12px;color:#e4e4e4;white-space:nowrap;letter-spacing:0.07px;left:1601px;">new</span>
<div style="left:1598px;top:470px;width:297px;height:14px;background:#262626;"></div>
<div style="left:1600px;top:472px;width:18px;height:12px;background:#8a4cff;border-radius:3px 3px 0 0;"></div>
<div style="left:1622px;top:472px;width:18px;height:12px;background:#4a9bf5;border-radius:3px 3px 0 0;"></div>
<div style="left:1644px;top:472px;width:18px;height:12px;background:#ff7a4f;border-radius:3px 3px 0 0;"></div>
<div style="left:1666px;top:472px;width:18px;height:12px;background:#4df0a6;border-radius:3px 3px 0 0;"></div>
<div style="left:1688px;top:472px;width:18px;height:12px;background:#ff4d5e;border-radius:3px 3px 0 0;"></div>
<div style="left:1710px;top:472px;width:18px;height:12px;background:#ff4dc0;border-radius:3px 3px 0 0;"></div>
<div style="left:1732px;top:472px;width:18px;height:12px;background:#ffcf4d;border-radius:3px 3px 0 0;"></div>
<div style="left:1754px;top:472px;width:18px;height:12px;background:#4166dc;border-radius:3px 3px 0 0;"></div>
<div style="left:1776px;top:472px;width:18px;height:12px;background:#4fe0d2;border-radius:3px 3px 0 0;"></div>
<div style="left:1798px;top:472px;width:18px;height:12px;background:#d87fd6;border-radius:3px 3px 0 0;"></div>
<div style="left:1820px;top:472px;width:18px;height:12px;background:#b0ea88;border-radius:3px 3px 0 0;"></div>
<div style="left:1842px;top:472px;width:18px;height:12px;background:#6b4dff;border-radius:3px 3px 0 0;"></div>
<div style="left:1593px;top:490px;width:321px;height:22px;background:#1c1c1c;"></div>
<div style="left:1593px;top:490px;width:38px;height:23px;background:#444444;border-radius:3px 3px 0 0;"></div>
<span class="t" style="top:494.5px;line-height:14px;font-size:12px;color:#e4e4e4;white-space:nowrap;letter-spacing:-0.033px;left:1598px;">Align</span>
<div style="left:1593px;top:512px;width:321px;height:68px;background:#444444;"></div>
<span class="t" style="top:525.0px;line-height:14px;font-size:12px;color:#e4e4e4;white-space:nowrap;letter-spacing:0.009px;left:1601px;">Alignment</span>
<span class="t" style="top:553.0px;line-height:14px;font-size:12px;color:#e4e4e4;white-space:nowrap;letter-spacing:0.199px;left:1601px;">Distribution</span>
<div style="left:1790.5px;top:522.5px;width:53.5px;height:17.5px;background:#2a2a2a;border-radius:3.5px;border:1px solid #242424;"></div>
<div style="left:1852.5px;top:522.5px;width:53.5px;height:17.5px;background:#2a2a2a;border-radius:3.5px;border:1px solid #242424;"></div>
<div style="left:1790.5px;top:550.5px;width:53.5px;height:17.5px;background:#2a2a2a;border-radius:3.5px;border:1px solid #242424;"></div>
<div style="left:494px;top:586px;width:1420px;height:22px;background:#1c1c1c;"></div>
<div style="left:494px;top:586px;width:88.5px;height:22px;background:#444444;border-radius:3px 3px 0 0;"></div>
<span class="t" style="top:590.5px;line-height:14px;font-size:12px;color:#e4e4e4;white-space:nowrap;letter-spacing:-0.121px;left:499.5px;">Scene Window</span>
<div style="left:584.5px;top:586px;width:98.5px;height:22px;background:#262626;border-radius:3px 3px 0 0;"></div>
<span class="t" style="top:590.5px;line-height:14px;font-size:12px;color:#e4e4e4;white-space:nowrap;letter-spacing:-0.211px;left:589.5px;">JavaScript Editor</span>
<div style="left:685px;top:586px;width:111.5px;height:22px;background:#262626;border-radius:3px 3px 0 0;"></div>
<span class="t" style="top:590.5px;line-height:14px;font-size:12px;color:#e4e4e4;white-space:nowrap;letter-spacing:-0.181px;left:690px;">Dependency Graph</span>
<div style="left:494px;top:607.7px;width:1419.5px;height:1.3px;background:#27c26a;"></div>
<div style="left:494px;top:609px;width:1420px;height:389px;background:#222;"></div>
<div style="left:494px;top:609px;width:5px;height:21px;background:#2a2a2a;"></div>
<div style="left:499px;top:609.5px;width:1409.5px;height:20.5px;background:#464646;border-radius:0 3px 0 0;"></div>
<span class="t" style="top:613.0px;line-height:14px;font-size:12px;color:#e4e4e4;white-space:nowrap;letter-spacing:-0.019px;left:1003.5px;width:400px;text-align:center;">Composition 1</span>
<div style="left:494px;top:630px;width:699px;height:42px;background:#444444;"></div>
<div style="left:494px;top:672px;width:699px;height:326px;background:#333333;"></div>
<div style="left:496px;top:632px;width:489.5px;height:20px;background:#2a2a2a;border-radius:10px;"></div>
<span class="t" style="top:635.5px;line-height:14px;font-size:12px;color:#8c8c8c;white-space:nowrap;letter-spacing:-0.265px;left:520px;">Enter a layer name</span>
<div style="left:987px;top:632.5px;width:19.5px;height:19.0px;background:#2a2a2a;border-radius:3.5px;border:1px solid #242424;"></div>
<div style="left:1031px;top:632.5px;width:19.5px;height:19.0px;background:#3a3a3a;border-radius:3.5px;border:1px solid #242424;"></div>
<div style="left:1053px;top:632.5px;width:19.5px;height:19.0px;background:#2a2a2a;border-radius:3.5px;border:1px solid #242424;"></div>
<div style="left:1075px;top:632.5px;width:19.5px;height:19.0px;background:#2a2a2a;border-radius:3.5px;border:1px solid #242424;"></div>
<div style="left:1097px;top:632px;width:93.5px;height:19.5px;background:#262626;border-radius:3px;"></div>
<span class="t" style="top:635.5px;line-height:14px;font-size:12px;color:#555;white-space:nowrap;left:1101.5px;">F</span>
<span class="t" style="top:635.5px;line-height:14px;font-size:12px;color:#cfe0f4;white-space:nowrap;left:1114px;">0</span>
<span class="t" style="top:656.7px;line-height:14px;font-size:12px;color:#e4e4e4;white-space:nowrap;letter-spacing:-0.277px;left:649.2px;">Name</span>
<div style="left:496px;top:674px;width:17.6px;height:17.6px;background:#292929;border-radius:2.5px;"></div>
<div style="left:515.2px;top:674px;width:17.8px;height:17.6px;background:#292929;border-radius:2.5px;"></div>
<div style="left:573px;top:675px;width:16px;height:16px;background:#c6f07a;border-radius:2.5px;"></div>
<span class="t" style="top:676.9px;line-height:14px;font-size:12px;color:#f0f0f0;white-space:nowrap;letter-spacing:0.256px;left:667px;">GridStrokeWidth</span>
<div style="left:1139px;top:675px;width:10px;height:16px;background:#262626;border-radius:3px 0 0 3px;border:1px solid #8f7f40;border-radius:1px;"></div>
<div style="left:1149.5px;top:675px;width:10.0px;height:16px;background:#262626;border-radius:0 3px 3px 0;"></div>
<div style="left:494px;top:694.5px;width:682.5px;height:20.5px;background:#594b44;border-radius:0 3px 3px 0;"></div>
<div style="left:496px;top:696px;width:17.6px;height:17.6px;background:#292929;border-radius:2.5px;"></div>
<div style="left:515.2px;top:696px;width:17.8px;height:17.6px;background:#292929;border-radius:2.5px;"></div>
<div style="left:573px;top:697px;width:16px;height:16px;background:#f4a671;border-radius:2.5px;"></div>
<span class="t" style="top:698.9px;line-height:14px;font-size:12px;color:#f0f0f0;white-space:nowrap;letter-spacing:-0.019px;left:667px;">DivideToGetAverage</span>
<div style="left:1139px;top:697px;width:10px;height:16px;background:#262626;border-radius:3px 0 0 3px;"></div>
<div style="left:1149.5px;top:697px;width:10.0px;height:16px;background:#262626;border-radius:0 3px 3px 0;"></div>
<div style="left:496px;top:718px;width:17.6px;height:17.6px;background:#292929;border-radius:2.5px;"></div>
<div style="left:515.2px;top:718px;width:17.8px;height:17.6px;background:#292929;border-radius:2.5px;"></div>
<div style="left:573px;top:719px;width:16px;height:16px;background:#f4a671;border-radius:2.5px;"></div>
<span class="t" style="top:720.9px;line-height:14px;font-size:12px;color:#f0f0f0;white-space:nowrap;letter-spacing:-0.178px;left:667px;">AddGridSizes</span>
<div style="left:1139px;top:719px;width:10px;height:16px;background:#262626;border-radius:3px 0 0 3px;"></div>
<div style="left:1149.5px;top:719px;width:10.0px;height:16px;background:#262626;border-radius:0 3px 3px 0;border:1px solid #9a48b0;border-radius:1px;"></div>
<div style="left:496px;top:740px;width:17.6px;height:17.6px;background:#292929;border-radius:2.5px;"></div>
<div style="left:515.2px;top:740px;width:17.8px;height:17.6px;background:#292929;border-radius:2.5px;"></div>
<div style="left:534.4px;top:740px;width:17.6px;height:17.6px;background:#292929;border-radius:2.5px;"></div>
<div style="left:573px;top:741px;width:16px;height:16px;background:#c8c8c8;border-radius:2.5px;"></div>
<div style="left:610px;top:741px;width:15px;height:16.5px;background:#2f2f2f;border-radius:3px 0 0 3px;"></div>
<div style="left:625.5px;top:741px;width:16.5px;height:16.5px;background:#2f2f2f;border-radius:0 3px 3px 0;"></div>
<span class="t" style="top:742.9px;line-height:14px;font-size:12px;color:#f0f0f0;white-space:nowrap;letter-spacing:0.252px;left:667px;">VerticalGrid</span>
<div style="left:496px;top:762px;width:17.6px;height:17.6px;background:#292929;border-radius:2.5px;"></div>
<div style="left:515.2px;top:762px;width:17.8px;height:17.6px;background:#292929;border-radius:2.5px;"></div>
<div style="left:534.4px;top:762px;width:17.6px;height:17.6px;background:#292929;border-radius:2.5px;"></div>
<div style="left:573px;top:763px;width:16px;height:16px;background:#c8c8c8;border-radius:2.5px;"></div>
<div style="left:610px;top:763px;width:15px;height:16.5px;background:#2f2f2f;border-radius:3px 0 0 3px;"></div>
<div style="left:625.5px;top:763px;width:16.5px;height:16.5px;background:#2f2f2f;border-radius:0 3px 3px 0;"></div>
<span class="t" style="top:764.9px;line-height:14px;font-size:12px;color:#f0f0f0;white-space:nowrap;letter-spacing:0.184px;left:667px;">HorizontalGrid</span>
<div style="left:496px;top:784px;width:17.6px;height:17.6px;background:#292929;border-radius:2.5px;"></div>
<div style="left:515.2px;top:784px;width:17.8px;height:17.6px;background:#292929;border-radius:2.5px;"></div>
<div style="left:573px;top:785px;width:16px;height:16px;background:#c6f07a;border-radius:2.5px;"></div>
<span class="t" style="top:786.9px;line-height:14px;font-size:12px;color:#f0f0f0;white-space:nowrap;letter-spacing:0.138px;left:686px;">HorizontalLineDistance</span>
<div style="left:1139px;top:785px;width:10px;height:16px;background:#262626;border-radius:3px 0 0 3px;"></div>
<div style="left:1149.5px;top:785px;width:10.0px;height:16px;background:#262626;border-radius:0 3px 3px 0;"></div>
<div style="left:496px;top:806px;width:17.6px;height:17.6px;background:#292929;border-radius:2.5px;"></div>
<div style="left:515.2px;top:806px;width:17.8px;height:17.6px;background:#292929;border-radius:2.5px;"></div>
<div style="left:534.4px;top:806px;width:17.6px;height:17.6px;background:#292929;border-radius:2.5px;"></div>
<div style="left:573px;top:807px;width:16px;height:16px;background:#fde87c;border-radius:2.5px;"></div>
<span class="t" style="top:808.9px;line-height:14px;font-size:12px;color:#f0f0f0;white-space:nowrap;letter-spacing:0.184px;left:686px;">HorizontalGrid</span>
<div style="left:1139px;top:807px;width:10px;height:16px;background:#262626;border-radius:3px 0 0 3px;"></div>
<div style="left:1149.5px;top:807px;width:10.0px;height:16px;background:#262626;border-radius:0 3px 3px 0;"></div>
<div style="left:496px;top:828px;width:17.6px;height:17.6px;background:#292929;border-radius:2.5px;"></div>
<div style="left:515.2px;top:828px;width:17.8px;height:17.6px;background:#292929;border-radius:2.5px;"></div>
<div style="left:534.4px;top:828px;width:17.6px;height:17.6px;background:#292929;border-radius:2.5px;"></div>
<div style="left:573px;top:829px;width:16px;height:16px;background:#fde87c;border-radius:2.5px;"></div>
<span class="t" style="top:830.9px;line-height:14px;font-size:12px;color:#8a8a8a;white-space:nowrap;letter-spacing:0.106px;left:686px;">HorizontalLine</span>
<div style="left:1139px;top:829px;width:10px;height:16px;background:#262626;border-radius:3px 0 0 3px;"></div>
<div style="left:1149.5px;top:829px;width:10.0px;height:16px;background:#262626;border-radius:0 3px 3px 0;"></div>
<div style="left:496px;top:850px;width:17.6px;height:17.6px;background:#292929;border-radius:2.5px;"></div>
<div style="left:515.2px;top:850px;width:17.8px;height:17.6px;background:#292929;border-radius:2.5px;"></div>
<div style="left:534.4px;top:850px;width:17.6px;height:17.6px;background:#292929;border-radius:2.5px;"></div>
<div style="left:573px;top:851px;width:16px;height:16px;background:#fde87c;border-radius:2.5px;"></div>
<div style="left:610px;top:851px;width:15px;height:16.5px;background:#2f2f2f;border-radius:3px 0 0 3px;"></div>
<div style="left:625.5px;top:851px;width:16.5px;height:16.5px;background:#2f2f2f;border-radius:0 3px 3px 0;"></div>
<span class="t" style="top:852.9px;line-height:14px;font-size:12px;color:#f0f0f0;white-space:nowrap;letter-spacing:-0.053px;left:667px;">CenterRectangle</span>
<div style="left:1139px;top:851px;width:10px;height:16px;background:#262626;border-radius:3px 0 0 3px;"></div>
<div style="left:1149.5px;top:851px;width:10.0px;height:16px;background:#262626;border-radius:0 3px 3px 0;"></div>
<span class="t" style="top:875.2px;line-height:14px;font-size:12px;color:#e4e4e4;white-space:nowrap;letter-spacing:-0.238px;left:647px;">Rectangle.Corner Radius</span>
<div style="left:1081px;top:873px;width:83.5px;height:16px;background:#262626;border-radius:3px 0 0 3px;"></div>
<div style="left:1165px;top:873px;width:9.5px;height:16px;background:#262626;border-radius:0 3px 3px 0;"></div>
<span class="t" style="top:874.8px;line-height:14px;font-size:12px;color:#5c5c5c;white-space:nowrap;left:1085.7px;">#</span>
<span class="t" style="top:874.8px;line-height:14px;font-size:12px;color:#e4e4e4;white-space:nowrap;letter-spacing:0.039px;left:1098px;">70.0</span>
<span class="t" style="top:897.2px;line-height:14px;font-size:12px;color:#e4e4e4;white-space:nowrap;letter-spacing:-0.347px;left:647px;">Rectangle.Size.H</span>
<div style="left:1081px;top:895px;width:83.5px;height:16px;background:#262626;border-radius:3px 0 0 3px;"></div>
<div style="left:1165px;top:895px;width:9.5px;height:16px;background:#262626;border-radius:0 3px 3px 0;"></div>
<span class="t" style="top:896.8px;line-height:14px;font-size:12px;color:#5c5c5c;white-space:nowrap;left:1084.5px;">H</span>
<span class="t" style="top:896.8px;line-height:14px;font-size:12px;color:#e4e4e4;white-space:nowrap;letter-spacing:0.076px;left:1098px;">700.0</span>
<span class="t" style="top:919.2px;line-height:14px;font-size:12px;color:#e4e4e4;white-space:nowrap;letter-spacing:-0.351px;left:647px;">Rectangle.Size.W</span>
<div style="left:1081px;top:917px;width:83.5px;height:16px;background:#262626;border-radius:3px 0 0 3px;"></div>
<div style="left:1165px;top:917px;width:9.5px;height:16px;background:#262626;border-radius:0 3px 3px 0;"></div>
<span class="t" style="top:918.8px;line-height:14px;font-size:12px;color:#5c5c5c;white-space:nowrap;left:1082.7px;">W</span>
<span class="t" style="top:918.8px;line-height:14px;font-size:12px;color:#e4e4e4;white-space:nowrap;letter-spacing:0.076px;left:1098px;">700.0</span>
<div style="left:496px;top:938px;width:17.6px;height:17.6px;background:#292929;border-radius:2.5px;"></div>
<div style="left:515.2px;top:938px;width:17.8px;height:17.6px;background:#292929;border-radius:2.5px;"></div>
<div style="left:534.4px;top:938px;width:17.6px;height:17.6px;background:#292929;border-radius:2.5px;"></div>
<div style="left:573px;top:939px;width:16px;height:16px;background:#fde87c;border-radius:2.5px;"></div>
<span class="t" style="top:940.9px;line-height:14px;font-size:12px;color:#f0f0f0;white-space:nowrap;letter-spacing:-0.256px;left:667px;">RectangleBG</span>
<div style="left:1139px;top:939px;width:10px;height:16px;background:#262626;border-radius:3px 0 0 3px;"></div>
<div style="left:1149.5px;top:939px;width:10.0px;height:16px;background:#262626;border-radius:0 3px 3px 0;"></div>
<div style="left:1179.2px;top:672px;width:13.8px;height:288px;background:#2e2e2e;"></div>
<div style="left:1180.8px;top:673px;width:10.2px;height:287px;background:#4e4e4e;border-radius:5px;"></div>
<div style="left:494px;top:957.5px;width:699px;height:18.5px;background:#2c2c2c;"></div>
<div style="left:496px;top:964px;width:681.5px;height:10px;background:#4e4e4e;border-radius:5px;"></div>
<div style="left:1179px;top:962px;width:14px;height:14px;background:#262626;"></div>
<div style="left:494px;top:976px;width:699px;height:22px;background:#444444;"></div>
<div style="left:496.5px;top:978px;width:18.5px;height:18.5px;background:#2a2a2a;border-radius:3.5px;border:1px solid #242424;"></div>
<span class="t" style="top:980.5px;line-height:14px;font-size:12px;color:#e4e4e4;white-space:nowrap;letter-spacing:-0.21px;left:520.5px;">1 selected</span>
<div style="left:984.5px;top:977.5px;width:19.0px;height:19.0px;background:#2a2a2a;border-radius:3.5px;border:1px solid #242424;"></div>
<div style="left:1007.5px;top:978px;width:182.0px;height:18px;background:#585858;border-radius:4px;"></div>
<div style="left:1008.5px;top:979px;width:85.0px;height:16px;background:#2a2a2a;border-radius:3.5px;"></div>
<span class="t" style="top:980.5px;line-height:14px;font-size:12px;color:#e4e4e4;white-space:nowrap;letter-spacing:-0.04px;left:1030.5px;">Time Editor</span>
<span class="t" style="top:980.5px;line-height:14px;font-size:12px;color:#e4e4e4;white-space:nowrap;letter-spacing:-0.118px;left:1118.5px;">Graph Editor</span>
<div style="left:1199.5px;top:630px;width:714.5px;height:346px;background:#262626;"></div>
<div style="left:1199.5px;top:630px;width:714.5px;height:24px;background:#222;"></div>
<span class="t" style="top:631.5px;line-height:14px;font-size:12px;color:#d8d8d8;white-space:nowrap;left:1005.2px;width:400px;text-align:center;">0</span>
<span class="t" style="top:631.5px;line-height:14px;font-size:12px;color:#d8d8d8;white-space:nowrap;letter-spacing:0.226px;left:1049.3px;width:400px;text-align:center;">15</span>
<span class="t" style="top:631.5px;line-height:14px;font-size:12px;color:#d8d8d8;white-space:nowrap;letter-spacing:0.226px;left:1091.3px;width:400px;text-align:center;">30</span>
<span class="t" style="top:631.5px;line-height:14px;font-size:12px;color:#d8d8d8;white-space:nowrap;letter-spacing:0.226px;left:1133.3px;width:400px;text-align:center;">45</span>
<span class="t" style="top:631.5px;line-height:14px;font-size:12px;color:#d8d8d8;white-space:nowrap;letter-spacing:0.226px;left:1175.3px;width:400px;text-align:center;">60</span>
<span class="t" style="top:631.5px;line-height:14px;font-size:12px;color:#d8d8d8;white-space:nowrap;letter-spacing:0.226px;left:1217.3px;width:400px;text-align:center;">75</span>
<span class="t" style="top:631.5px;line-height:14px;font-size:12px;color:#d8d8d8;white-space:nowrap;letter-spacing:0.226px;left:1259.3px;width:400px;text-align:center;">90</span>
<span class="t" style="top:631.5px;line-height:14px;font-size:12px;color:#d8d8d8;white-space:nowrap;letter-spacing:0.226px;left:1301.3px;width:400px;text-align:center;">105</span>
<span class="t" style="top:631.5px;line-height:14px;font-size:12px;color:#d8d8d8;white-space:nowrap;letter-spacing:0.226px;left:1343.3px;width:400px;text-align:center;">120</span>
<span class="t" style="top:631.5px;line-height:14px;font-size:12px;color:#d8d8d8;white-space:nowrap;letter-spacing:0.226px;left:1385.3px;width:400px;text-align:center;">135</span>
<span class="t" style="top:631.5px;line-height:14px;font-size:12px;color:#d8d8d8;white-space:nowrap;letter-spacing:0.226px;left:1427.3px;width:400px;text-align:center;">150</span>
<span class="t" style="top:631.5px;line-height:14px;font-size:12px;color:#d8d8d8;white-space:nowrap;letter-spacing:0.226px;left:1469.3px;width:400px;text-align:center;">165</span>
<span class="t" style="top:631.5px;line-height:14px;font-size:12px;color:#d8d8d8;white-space:nowrap;letter-spacing:0.226px;left:1511.3px;width:400px;text-align:center;">180</span>
<span class="t" style="top:631.5px;line-height:14px;font-size:12px;color:#d8d8d8;white-space:nowrap;letter-spacing:0.226px;left:1553.3px;width:400px;text-align:center;">195</span>
<span class="t" style="top:631.5px;line-height:14px;font-size:12px;color:#d8d8d8;white-space:nowrap;letter-spacing:0.226px;left:1595.3px;width:400px;text-align:center;">210</span>
<span class="t" style="top:631.5px;line-height:14px;font-size:12px;color:#d8d8d8;white-space:nowrap;letter-spacing:0.226px;left:1637.3px;width:400px;text-align:center;">225</span>
<span class="t" style="top:631.5px;line-height:14px;font-size:12px;color:#d8d8d8;white-space:nowrap;letter-spacing:0.226px;left:1679.3px;width:400px;text-align:center;">240</span>
<div style="left:1201.5px;top:654px;width:705.0px;height:17px;background:#464646;"></div>
<div style="left:1201.5px;top:652.5px;width:5.3px;height:18.5px;background:#6cc5b0;border-radius:1px;"></div>
<div style="left:1206.3px;top:671px;width:1.7px;height:290.5px;background:#4f9f8e;"></div>
<div style="left:1906.5px;top:653px;width:5.0px;height:18px;background:#6cc5b0;border-radius:1px;"></div>
<div style="left:1199.5px;top:672px;width:7.0px;height:22px;background:#2c2c2c;"></div>
<div style="left:1207.6px;top:674px;width:698.9px;height:18px;background:repeating-linear-gradient(135deg,#dcf996 -22.25px,#c9f17d -20.95px,#c9f17d -9.95px,#dcf996 -9.65px,#c0e778 -8.45px,#b3d76c -3.75px,#b3d76c 2.45px,#dcf996 2.5px);"></div>
<span class="t" style="top:676.0px;line-height:14px;font-size:12px;color:#2f3a18;white-space:nowrap;letter-spacing:0.256px;left:1215.4px;">GridStrokeWidth</span>
<div style="left:1207.6px;top:696.3px;width:698.9px;height:17.6px;border:1px solid #fff;background:radial-gradient(circle at 1.45px 1.45px,#dc8452 0.75px,rgba(220,132,82,0) 1.25px) 0 0/2.9px 2.9px,repeating-linear-gradient(135deg,#fff6c8 -22.25px,#fff0b4 -20.95px,#fff0b4 -9.95px,#fff6c8 -9.65px,#fbdca0 -8.45px,#f8c890 -3.75px,#f8c890 2.45px,#fff6c8 2.5px);"></div>
<span class="t" style="top:698.0px;line-height:14px;font-size:12px;color:rgba(255,255,255,0.8);white-space:nowrap;letter-spacing:-0.019px;left:1215.4px;">DivideToGetAverage</span>
<div style="left:1207.6px;top:718px;width:698.9px;height:18px;background:repeating-linear-gradient(135deg,#fdc494 -22.25px,#f5a973 -20.95px,#f5a973 -9.95px,#fdc494 -9.65px,#eaa06c -8.45px,#da9464 -3.75px,#da9464 2.45px,#fdc494 2.5px);"></div>
<span class="t" style="top:720.0px;line-height:14px;font-size:12px;color:#fff;white-space:nowrap;letter-spacing:-0.178px;left:1215.4px;-webkit-text-stroke:0.35px #fff;">AddGridSizes</span>
<div style="left:1207.6px;top:740px;width:698.9px;height:18px;background:#c8c8c8;border-radius:3px;"></div>
<span class="t" style="top:742.0px;line-height:14px;font-size:12px;color:#333;white-space:nowrap;letter-spacing:0.252px;left:1215.4px;">VerticalGrid</span>
<div style="left:1207.6px;top:762px;width:698.9px;height:18px;background:#c8c8c8;border-radius:3px;"></div>
<span class="t" style="top:764.0px;line-height:14px;font-size:12px;color:#333;white-space:nowrap;letter-spacing:0.184px;left:1215.4px;">HorizontalGrid</span>
<div style="left:1207.6px;top:784px;width:698.9px;height:18px;background:repeating-linear-gradient(135deg,#dcf996 -22.25px,#c9f17d -20.95px,#c9f17d -9.95px,#dcf996 -9.65px,#c0e778 -8.45px,#b3d76c -3.75px,#b3d76c 2.45px,#dcf996 2.5px);"></div>
<span class="t" style="top:786.0px;line-height:14px;font-size:12px;color:#2f3a18;white-space:nowrap;letter-spacing:0.138px;left:1215.4px;">HorizontalLineDistance</span>
<div style="left:1207.6px;top:806px;width:698.9px;height:18px;background:#fde87c;border-radius:3px;"></div>
<span class="t" style="top:808.0px;line-height:14px;font-size:12px;color:#333;white-space:nowrap;letter-spacing:0.184px;left:1215.4px;">HorizontalGrid</span>
<div style="left:1207.6px;top:828px;width:698.9px;height:18px;background:#fde87c;border-radius:3px;"></div>
<span class="t" style="top:830.0px;line-height:14px;font-size:12px;color:#333;white-space:nowrap;letter-spacing:0.106px;left:1215.4px;">HorizontalLine</span>
<div style="left:1207.6px;top:850px;width:698.9px;height:18px;background:#fde87c;border-radius:3px;"></div>
<span class="t" style="top:852.0px;line-height:14px;font-size:12px;color:#333;white-space:nowrap;letter-spacing:-0.053px;left:1215.4px;">CenterRectangle</span>
<div style="left:1207.6px;top:938px;width:698.9px;height:18px;background:#fde87c;border-radius:3px;"></div>
<span class="t" style="top:940.0px;line-height:14px;font-size:12px;color:#333;white-space:nowrap;letter-spacing:-0.256px;left:1215.4px;">RectangleBG</span>
<div style="left:1199.5px;top:961.5px;width:714.5px;height:14.5px;background:#2c2c2c;"></div>
<div style="left:1201px;top:964px;width:712px;height:10px;background:#4e4e4e;border-radius:5px;"></div>
<div style="left:1199.5px;top:976px;width:714.5px;height:22px;background:#3c3c3c;"></div>
<div style="left:1203px;top:978px;width:17.5px;height:18px;background:#2a2a2a;border-radius:3.5px;border:1px solid #242424;"></div>
<div style="left:1224px;top:979px;width:149.5px;height:16px;background:#262626;border-radius:3px;"></div>
<span class="t" style="top:980.5px;line-height:14px;font-size:12px;color:#e4e4e4;white-space:nowrap;letter-spacing:-0.106px;left:1226.5px;">Default Keyframe Layer</span>
<div style="left:1380px;top:979px;width:69.5px;height:16px;background:#262626;border-radius:3px;"></div>
<span class="t" style="top:980.5px;line-height:14px;font-size:12px;color:#444;white-space:nowrap;left:1384px;">F</span>
<span class="t" style="top:980.5px;line-height:14px;font-size:12px;color:#c8c8c8;white-space:nowrap;left:1396.5px;">-</span>
<span class="t" style="top:980.5px;line-height:14px;font-size:12px;color:#e4e4e4;white-space:nowrap;letter-spacing:-0.087px;left:1456px;">Align:</span>
<div style="left:1492.5px;top:978px;width:53.0px;height:18px;background:#2a2a2a;border-radius:3.5px;border:1px solid #242424;"></div>
<div style="left:1549px;top:978px;width:17.5px;height:18px;background:#2a2a2a;border-radius:3.5px;border:1px solid #242424;"></div>
<div style="left:1570px;top:977.5px;width:31.5px;height:18.5px;background:#2a2a2a;border-radius:3.5px;border:1px solid #242424;"></div>
<div style="left:1605.5px;top:977.5px;width:31.0px;height:18.5px;background:#2a2a2a;border-radius:3.5px;border:1px solid #242424;"></div>
<div style="left:1768px;top:985.5px;width:114px;height:3.0px;background:#464646;border-radius:1.5px;"></div>
<div style="left:494px;top:1003.4px;width:1420px;height:21.6px;background:#3c3c3c;"></div>
<div style="left:506.5px;top:1005px;width:17.5px;height:18px;background:#2a2a2a;border-radius:3.5px;border:1px solid #242424;"></div>
<div style="left:528px;top:1006px;width:18px;height:16.5px;background:#2ecc71;border-radius:2.5px;"></div>
<span class="t" style="top:1007.5px;line-height:14px;font-size:12px;color:#1a3a26;white-space:nowrap;left:337px;width:400px;text-align:center;">0</span>
<span class="t" style="top:1008.0px;line-height:14px;font-size:12px;color:#e4e4e4;white-space:nowrap;letter-spacing:-0.062px;left:565px;">Connected:</span>
<span class="t" style="top:1008.0px;line-height:14px;font-size:12px;color:#e070e6;white-space:nowrap;letter-spacing:-0.037px;left:628.3px;">DivideToGetAverage</span>
<span class="t" style="top:1008.0px;line-height:14px;font-size:12px;color:#e4e4e4;white-space:nowrap;letter-spacing:0.8px;left:740px;">to</span>
<span class="t" style="top:1008.0px;line-height:14px;font-size:12px;color:#d4b95e;white-space:nowrap;letter-spacing:0.249px;left:753.3px;">GridStrokeWidth</span>
<span class="t" style="top:1008.0px;line-height:14px;font-size:12px;color:#e4e4e4;white-space:nowrap;left:844.6px;">.</span>
<div style="left:1477px;top:1006px;width:80px;height:17.5px;background:#d4b95e;border-radius:2.5px;"></div>
<span class="t" style="top:1008.7px;line-height:14px;font-size:12px;color:#2a2a2a;white-space:nowrap;letter-spacing:-0.363px;left:1482.5px;">Feedback</span>
<div style="left:1560px;top:1006px;width:109px;height:17.5px;background:#2ecc71;border-radius:2.5px;"></div>
<span class="t" style="top:1008.7px;line-height:14px;font-size:12px;color:#2a2a2a;white-space:nowrap;letter-spacing:-0.133px;left:1565.5px;">Upgrade to Pro</span>
<div style="left:1672px;top:1006px;width:130px;height:17.5px;background:#c29bff;border-radius:2.5px;"></div>
<span class="t" style="top:1008.7px;line-height:14px;font-size:12px;color:#2a2a2a;white-space:nowrap;letter-spacing:-0.13px;left:1677.5px;">New Beta Available</span>
<div style="left:1805px;top:1006px;width:106px;height:17.5px;background:#3ba6f4;border-radius:2.5px;"></div>
<span class="t" style="top:1008.7px;line-height:14px;font-size:12px;color:#2a2a2a;white-space:nowrap;letter-spacing:-0.251px;left:1810.5px;">Tips and Tricks</span>
<div style="left:0px;top:1025px;width:1920px;height:5px;background:#1e1e1e;"></div>
<div style="left:1914px;top:23px;width:6px;height:1007px;background:#1e1e1e;"></div>
<div style="left:0px;top:49px;width:6px;height:981px;background:#1e1e1e;"></div>
<svg class="ov" viewBox="0 0 1920 1030" width="1920" height="1030">
<rect x="4" y="4" width="13" height="14" fill="#111" rx="3" />
<path d="M13.4 8 A3.8 3.8 0 1 0 13.4 14" fill="none" stroke="#9a9a9a" stroke-width="1.5" />
<path d="M12.4 9.6 A1.8 1.8 0 1 0 12.4 12.4" fill="none" stroke="#555" stroke-width="0.8" />
<line x1="1799" y1="10.3" x2="1809" y2="10.3" stroke="#111" stroke-width="1" />
<rect x="1844.5" y="7.3" width="8.0" height="8.0" fill="none" rx="1.5" stroke="#111" stroke-width="1" />
<path d="M1846.5 5.3 H1853 A1.5 1.5 0 0 1 1854.5 6.8 V13.3" fill="none" stroke="#111" stroke-width="1" />
<path d="M1890 5.3 L1900 15.3 M1900 5.3 L1890 15.3" fill="none" stroke="#111" stroke-width="1.1" />
<rect x="10.2" y="59.1" width="1.8" height="1.8" fill="#8a8a8a" />
<rect x="10.2" y="63.1" width="1.8" height="1.8" fill="#8a8a8a" />
<rect x="10.2" y="67.1" width="1.8" height="1.8" fill="#8a8a8a" />
<rect x="167" y="57.5" width="2" height="2.0" fill="#2ecc71" />
<rect x="178" y="57.5" width="2" height="2.0" fill="#2ecc71" />
<rect x="167" y="68.5" width="2" height="2.0" fill="#2ecc71" />
<rect x="178" y="68.5" width="2" height="2.0" fill="#2ecc71" />
<rect x="169.5" y="59.5" width="5.0" height="5.0" fill="#2ecc71" />
<rect x="172.5" y="63.5" width="5.0" height="5.0" fill="#2ecc71" />
<rect x="228" y="57.5" width="2" height="2.0" fill="#ccc" />
<rect x="239" y="57.5" width="2" height="2.0" fill="#ccc" />
<rect x="228" y="68.5" width="2" height="2.0" fill="#ccc" />
<rect x="239" y="68.5" width="2" height="2.0" fill="#ccc" />
<rect x="231.5" y="61.0" width="6.0" height="6.0" fill="#ccc" />
<path d="M382.5 64.5 L386.2 68.2 L393.5 59.2" fill="none" stroke="#2ecc71" stroke-width="2" />
<path d="M520.0 64.5 L523.7 68.2 L531.0 59.2" fill="none" stroke="#2ecc71" stroke-width="2" />
<rect x="967.2" y="59.1" width="1.8" height="1.8" fill="#8a8a8a" />
<rect x="967.2" y="63.1" width="1.8" height="1.8" fill="#8a8a8a" />
<rect x="967.2" y="67.1" width="1.8" height="1.8" fill="#8a8a8a" />
<circle cx="981.5" cy="58.5" r="1.1" fill="#ddd" />
<circle cx="989.5" cy="58.5" r="1.1" fill="#ddd" />
<circle cx="981.5" cy="65.5" r="1.1" fill="#ddd" />
<path d="M988.5 62.0 L989.6 64.9 L992.5 66.0 L989.6 67.1 L988.5 70.0 L987.4 67.1 L984.5 66.0 L987.4 64.9 Z" fill="#ddd" />
<polygon points="993.0,71.0 993.0,68.0 990.0,71.0" fill="#4fc7a0" />
<circle cx="1077.5" cy="64.5" r="0.9" fill="#2a2a2a" />
<path d="M1094 56.5 L1089 65.5 H1092.8 L1091.5 71.5 L1096.5 62.5 H1092.8 Z" fill="#6fd0b0" />
<circle cx="1493.3" cy="64.5" r="0.9" fill="#2a2a2a" />
<circle cx="1558.6" cy="64.5" r="0.9" fill="#2a2a2a" />
<circle cx="1683.5" cy="64.5" r="0.9" fill="#2a2a2a" />
<circle cx="1718.7" cy="64.5" r="0.9" fill="#2a2a2a" />
<circle cx="1783.5" cy="64.5" r="0.9" fill="#2a2a2a" />
<circle cx="1878.5" cy="64.5" r="0.9" fill="#2a2a2a" />
<circle cx="1378.5" cy="57.0" r="1.5" fill="#e6d46e" />
<circle cx="1378.5" cy="64.5" r="1.5" fill="#e6d46e" />
<circle cx="1378.5" cy="72.0" r="1.5" fill="#e6d46e" />
<circle cx="1386.0" cy="57.0" r="1.5" fill="#e6d46e" />
<circle cx="1386.0" cy="64.5" r="1.5" fill="#e6d46e" />
<circle cx="1386.0" cy="72.0" r="1.5" fill="#e6d46e" />
<circle cx="1393.5" cy="57.0" r="1.5" fill="#e6d46e" />
<circle cx="1393.5" cy="64.5" r="1.5" fill="#e6d46e" />
<circle cx="1393.5" cy="72.0" r="1.5" fill="#e6d46e" />
<polygon points="1407.0,60 1420.0,60 1420.0,73 1407.0,73" fill="#e6d46e" />
<polygon points="1407.0,60 1412.0,55.5 1425.0,55.5 1420.0,60" fill="#e8e8e8" />
<polygon points="1420.0,60 1425.0,55.5 1425.0,68.5 1420.0,73" fill="#bdbdbd" />
<rect x="1436.5" y="55" width="19.0" height="19" fill="none" rx="5" stroke="#e0e0e0" stroke-width="1.2" />
<rect x="1441.0" y="58.5" width="3.0" height="12.5" fill="#e6d46e" />
<rect x="1445.5" y="58.5" width="6.0" height="3.0" fill="#e6d46e" />
<rect x="1445.5" y="63.5" width="4.5" height="3.0" fill="#e6d46e" />
<circle cx="1469.0" cy="57.5" r="1.5" fill="#e6d46e" />
<circle cx="1480.0" cy="56.5" r="1.5" fill="#ddd" />
<circle cx="1474.0" cy="60.5" r="1.5" fill="#ccc" />
<circle cx="1483.0" cy="64.5" r="2.6" fill="#e6d46e" />
<circle cx="1475.0" cy="67.5" r="2.6" fill="#ccc" />
<circle cx="1468.0" cy="68.5" r="1.5" fill="#e6d46e" />
<circle cx="1481.0" cy="72.5" r="1.5" fill="#e6d46e" />
<line x1="1500.8" y1="64" x2="1503.3" y2="64" stroke="#8fdc8f" stroke-width="1.6" />
<line x1="1505.8" y1="64" x2="1509.3" y2="64" stroke="#8fdc8f" stroke-width="1.6" />
<line x1="1511.3" y1="64" x2="1519.8" y2="64" stroke="#8fdc8f" stroke-width="1.6" />
<path d="M1514.3 57.5 L1520.8 64 L1514.3 70.5" fill="none" stroke="#8fdc8f" stroke-width="1.8" />
<line x1="1532.8" y1="54" x2="1532.8" y2="74" stroke="#ddd" stroke-width="1" />
<rect x="1536.3" y="58" width="9.0" height="5" fill="#8fdc8f" />
<rect x="1536.3" y="65" width="14.0" height="5" fill="#8fdc8f" />
<rect x="1567.3" y="62" width="17.0" height="5" fill="#555" rx="2.5" />
<rect x="1573.3" y="56" width="5.0" height="17" fill="#555" rx="2.5" />
<circle cx="1575.8" cy="56.5" r="2.2" fill="#8fc8f8" />
<circle cx="1567.8" cy="64.5" r="2.2" fill="#8fc8f8" />
<circle cx="1575.8" cy="64.5" r="2.2" fill="#8fc8f8" />
<circle cx="1583.8" cy="64.5" r="2.2" fill="#8fc8f8" />
<circle cx="1575.8" cy="72.5" r="2.2" fill="#8fc8f8" />
<rect x="1595.3" y="62" width="21.0" height="5" fill="#555" rx="2.5" />
<circle cx="1597.8" cy="64.5" r="2.2" fill="#8fc8f8" />
<circle cx="1605.8" cy="64.5" r="2.2" fill="#8fc8f8" />
<circle cx="1613.8" cy="64.5" r="2.2" fill="#8fc8f8" />
<path d="M1639.3 57.5 A7.5 7.5 0 0 0 1639.3 72" fill="none" stroke="#ddd" stroke-width="1.6" />
<path d="M1639.3 69 V75 M1636.8 72 H1641.8" fill="none" stroke="#8fdc8f" stroke-width="1.3" />
<path d="M1639.3 54.5 V60.5 M1636.8 57.5 H1641.8" fill="none" stroke="#8fdc8f" stroke-width="1.3" />
<line x1="1655.3" y1="59.5" x2="1676.8" y2="59.5" stroke="#ddd" stroke-width="1" />
<line x1="1655.3" y1="69.5" x2="1676.8" y2="69.5" stroke="#ddd" stroke-width="1" />
<rect x="1655.8" y="61.5" width="3.5" height="6.0" fill="#e6d46e" />
<rect x="1660.8" y="61.5" width="10.0" height="6.0" fill="#e6d46e" />
<rect x="1672.3" y="61.5" width="4.0" height="6.0" fill="#e6d46e" />
<g transform="rotate(-14 1700.3 63)"><rect x="1693.8" y="55.5" width="13" height="3.4" fill="#e6d46e"/><rect x="1698.6" y="55.5" width="3.6" height="14" fill="#e6d46e"/></g>
<path d="M1691.3 73 C1696.3 77 1700.3 73.5 1705.3 72.5 C1708.3 72 1710.3 74 1711.8 75.5" fill="none" stroke="#ccc" stroke-width="1" />
<line x1="1725.8" y1="55.8" x2="1745.8" y2="55.8" stroke="#8fc8f8" stroke-width="1.6" />
<rect x="1725.8" y="59.5" width="4.0" height="3.8" fill="#d6d6d6" />
<rect x="1730.8" y="64.5" width="9.0" height="3.8" fill="#d6d6d6" />
<rect x="1740.8" y="69.5" width="5.0" height="3.8" fill="#d6d6d6" />
<line x1="1755.8" y1="55.8" x2="1775.8" y2="55.8" stroke="#8fc8f8" stroke-width="1.6" />
<rect x="1755.8" y="59.5" width="12.0" height="3.8" fill="#d6d6d6" />
<rect x="1759.8" y="64.5" width="12.0" height="3.8" fill="#d6d6d6" />
<rect x="1764.8" y="69.5" width="11.0" height="3.8" fill="#d6d6d6" />
<rect x="1790.3" y="56.5" width="21.0" height="15.5" fill="none" stroke="#e0e0e0" stroke-width="1.2" />
<rect x="1792.8" y="59" width="4.0" height="10.5" fill="#e6d46e" />
<rect x="1799.0" y="59" width="4.0" height="10.5" fill="#e6d46e" />
<rect x="1805.2" y="59" width="4.0" height="10.5" fill="#e6d46e" />
<rect x="1820.3" y="56.5" width="21.0" height="15.5" fill="none" stroke="#e0e0e0" stroke-width="1.2" />
<rect x="1822.8" y="59" width="16.0" height="4" fill="#e6d46e" />
<rect x="1822.8" y="65.5" width="16.0" height="4.0" fill="#e6d46e" />
<rect x="1850.3" y="56.5" width="21.0" height="15.5" fill="none" stroke="#e0e0e0" stroke-width="1.2" />
<rect x="1852.8" y="59" width="7.0" height="4" fill="#e6d46e" />
<rect x="1852.8" y="65.5" width="7.0" height="4.0" fill="#e6d46e" />
<rect x="1861.8" y="59" width="7.0" height="4" fill="#e6d46e" />
<rect x="1861.8" y="65.5" width="7.0" height="4.0" fill="#e6d46e" />
<path d="M1885.8 60.5 Q1885.8 58.5 1887.8 58.5 H1896.8 Q1898.8 58.5 1898.8 60.5 V67.5 L1896.3 70.5 H1887.8 Q1885.8 70.5 1885.8 68.5 Z" fill="#d0d0d0" />
<polygon points="1900.3,64.5 1906.3,60.0 1906.3,69.0" fill="#d0d0d0" />
<rect x="1887.8" y="56.5" width="8.0" height="1.2" fill="#d0d0d0" />
<circle cx="1889.0" cy="61.9" r="1.2" fill="#2a2a2a" />
<circle cx="18.0" cy="119.5" r="4" fill="none" stroke="#ddd" stroke-width="1.1" />
<line x1="21.1" y1="122.6" x2="24.0" y2="125.5" stroke="#ddd" stroke-width="1.8" />
<path d="M472.5 118.4 L476 121.19999999999999 L479.5 118.4" fill="none" stroke="#d0d0d0" stroke-width="1.1" />
<g transform="translate(13 136.5)"><path d="M1 11.5 L1.5 9.5 L6.8 4.2 L8.3 5.7 L3 11 Z" fill="none" stroke="#b8b8b8" stroke-width="1"/><path d="M6.5 2.6 L9.9 6 L10.8 5.1 L9.9 4.2 L11.4 2.7 A1.5 1.5 0 0 0 9.3 0.6 L7.8 2.1 L6.9 1.2 Z" fill="#b8b8b8"/></g>
<rect x="53.6" y="156.6" width="12.8" height="7.4" fill="none" stroke="#d0d0d0" stroke-width="1.2" />
<rect x="53" y="164.6" width="14" height="2.4" fill="#d0d0d0" />
<g fill="none" stroke="#8a8a8a" stroke-width="1.2"><path d="M254.3 228.5 A9.6 9.6 0 1 0 238.6 229"/><path d="M251.3 226.5 A5.8 5.8 0 1 0 241.5 227"/></g>
<path d="M246 222.5 V235.5 L249 232.8 L251.2 238.3 L253.4 237.3 L251.2 232 L255.4 231.8 Z" fill="#2a2a2a" stroke="#8a8a8a" stroke-width="1.1" />
<path d="M12 335.5 Q12 334.5 13 334.5 H17.5 L19 336.5 H24.5 V337.5 H12 Z" fill="#ddd" />
<rect x="12" y="338.3" width="13.5" height="7.7" fill="#ddd" rx="0.8" />
<line x1="14.5" y1="340.5" x2="16" y2="340.5" stroke="#2a2a2a" stroke-width="1" />
<line x1="17" y1="340.5" x2="23.5" y2="340.5" stroke="#2a2a2a" stroke-width="1" />
<line x1="14.5" y1="343" x2="16" y2="343" stroke="#2a2a2a" stroke-width="1" />
<line x1="17" y1="343" x2="23.5" y2="343" stroke="#2a2a2a" stroke-width="1" />
<polygon points="27,349 27,346.5 24.5,349" fill="#4fc7a0" />
<path d="M219.0 339.9 L222.5 342.70000000000005 L226.0 339.9" fill="none" stroke="#d0d0d0" stroke-width="1.1" />
<path d="M422.5 335.5 Q422.5 334.5 423.5 334.5 H428.0 L429.5 336.5 H435.5 V337.5 H422.5 Z" fill="#c4c4c4" />
<rect x="422.5" y="338.3" width="14.0" height="8.2" fill="#c4c4c4" rx="0.8" />
<rect x="446.1" y="335.6" width="12.8" height="7.9" fill="none" stroke="#d0d0d0" stroke-width="1.2" />
<rect x="445.5" y="344.1" width="14.0" height="2.4" fill="#d0d0d0" />
<g fill="#c4c4c4"><rect x="470.5" y="335.6" width="10" height="1.6"/><rect x="473.5" y="334" width="4" height="2"/><path d="M471.3 338.2 H479.7 L479 346.5 H472 Z"/></g>
<line x1="473.6" y1="339.5" x2="473.6" y2="345.3" stroke="#2a2a2a" stroke-width="0.9" />
<line x1="475.5" y1="339.5" x2="475.5" y2="345.3" stroke="#2a2a2a" stroke-width="0.9" />
<line x1="477.4" y1="339.5" x2="477.4" y2="345.3" stroke="#2a2a2a" stroke-width="0.9" />
<circle cx="18.0" cy="391.5" r="4" fill="none" stroke="#ddd" stroke-width="1.1" />
<line x1="21.1" y1="394.6" x2="24.0" y2="397.5" stroke="#ddd" stroke-width="1.8" />
<g fill="none" stroke="#c0c0c0" stroke-width="1.1"><path d="M432.8 391 A4.4 4.4 0 1 0 426 393"/><path d="M430.6 390 A2 2 0 1 0 427.6 391"/></g>
<path d="M429.2 389.8 V398.3 L431.2 396.5 L432.6 399.8 L434 399.2 L432.6 396 L435.2 395.8 Z" fill="#c8c8c8" />
<line x1="446.5" y1="388.6" x2="453.5" y2="388.6" stroke="#e0e0e0" stroke-width="1.7" />
<line x1="448.5" y1="392.0" x2="455.5" y2="392.0" stroke="#e0e0e0" stroke-width="1.7" />
<line x1="450.5" y1="395.40000000000003" x2="457.5" y2="395.40000000000003" stroke="#e0e0e0" stroke-width="1.7" />
<path d="M456.5 384.6 V389.6 M454 387.1 H459" fill="none" stroke="#e0e0e0" stroke-width="1.1" />
<path d="M468.5 392 L472.5 387.5 H482.5 V396.5 H472.5 Z" fill="#e0e0e0" />
<path d="M474.8 389.3 L480.2 394.7 M480.2 389.3 L474.8 394.7" fill="none" stroke="#2a2a2a" stroke-width="1.3" />
<path d="M14.9 418.7 L18.5 421.90000000000003 L22.1 418.7" fill="none" stroke="#c8c8c8" stroke-width="1.1" />
<path d="M41.4 418.9 A4.6 4.6 0 1 1 39.1 415.9" fill="none" stroke="#d8d8d8" stroke-width="1.1" />
<path d="M34.7 419.5 L36.8 421.8 L41.6 416.0" fill="none" stroke="#d8d8d8" stroke-width="1.4" />
<circle cx="55" cy="420.0" r="4.2" fill="none" stroke="#7a7a7a" stroke-width="1.1" />
<line x1="70.1" y1="418.4" x2="76.1" y2="418.4" stroke="#8fc8f8" stroke-width="1" />
<line x1="70.1" y1="421.6" x2="76.1" y2="421.6" stroke="#8fc8f8" stroke-width="1" />
<line x1="367.5" y1="417.0" x2="372.5" y2="417.0" stroke="#e0e0e0" stroke-width="1.5" />
<line x1="367.5" y1="423.0" x2="372.5" y2="423.0" stroke="#e0e0e0" stroke-width="1.5" />
<line x1="374" y1="420.0" x2="380" y2="420.0" stroke="#e0e0e0" stroke-width="1.5" />
<polygon points="382,427.5 382,425 379.5,427.5" fill="#4fc7a0" />
<polygon points="387.9,420.0 390.7,416.9 394.3,416.9 394.3,423.1 390.7,423.1" fill="#d4b95e" />
<polygon points="404.7,420.0 401.9,416.9 398.3,416.9 398.3,423.1 401.9,423.1" fill="#c850e6" />
<g transform="translate(418.7 420.0)" fill="#dcdcdc"><path d="M-2.3 -6 H2.3 V-5 H1.6 L2 -1.4 L3.6 0.6 V1.5 H-3.6 V0.6 L-2 -1.4 L-1.6 -5 H-2.3 Z"/><rect x="-0.5" y="1.5" width="1" height="4.5"/></g>
<circle cx="434.2" cy="415.0" r="0.902" fill="#ddd" />
<circle cx="440.76" cy="415.0" r="0.902" fill="#ddd" />
<circle cx="434.2" cy="420.74" r="0.902" fill="#ddd" />
<path d="M439.67 417.6 L440.572 419.978 L442.95 420.88 L440.572 421.782 L439.67 424.15999999999997 L438.76800000000003 421.782 L436.39000000000004 420.88 L438.76800000000003 419.978 Z" fill="#ddd" />
<polygon points="443.36,424.98 443.36,422.52 440.9,424.98" fill="#4fc7a0" />
<path d="M455 416.2 L462.6 423.8 M462.6 416.2 L455 423.8" fill="none" stroke="#d0d0d0" stroke-width="1.1" />
<circle cx="19" cy="444.1" r="4.2" fill="none" stroke="#808080" stroke-width="1" />
<polygon points="250.6,444 253.4,440.9 257.0,440.9 257.0,447.1 253.4,447.1" fill="#d4b95e" />
<polygon points="269.1,444 266.3,440.9 262.7,440.9 262.7,447.1 266.3,447.1" fill="#8a8a8a" />
<circle cx="19" cy="466.1" r="4.2" fill="none" stroke="#808080" stroke-width="1" />
<path d="M358.0 464.7 L361.5 467.50000000000006 L365.0 464.7" fill="none" stroke="#d0d0d0" stroke-width="1.1" />
<circle cx="19" cy="488.1" r="4.2" fill="none" stroke="#808080" stroke-width="1" />
<circle cx="19" cy="510.1" r="4.2" fill="none" stroke="#808080" stroke-width="1" />
<path d="M14.9 535.7 L18.5 538.9 L22.1 535.7" fill="none" stroke="#c8c8c8" stroke-width="1.1" />
<path d="M41.4 535.9 A4.6 4.6 0 1 1 39.1 532.9" fill="none" stroke="#d8d8d8" stroke-width="1.1" />
<path d="M34.7 536.5 L36.8 538.8 L41.6 533.0" fill="none" stroke="#d8d8d8" stroke-width="1.4" />
<circle cx="55" cy="537.0" r="4.2" fill="none" stroke="#7a7a7a" stroke-width="1.1" />
<rect x="72.9" y="529.5" width="4.4" height="13.5" fill="#8fd890" />
<rect x="69.7" y="537.0" width="4.0" height="6.0" fill="#d4d4d4" />
<line x1="367.5" y1="534.0" x2="372.5" y2="534.0" stroke="#e0e0e0" stroke-width="1.5" />
<line x1="367.5" y1="540.0" x2="372.5" y2="540.0" stroke="#e0e0e0" stroke-width="1.5" />
<line x1="374" y1="537.0" x2="380" y2="537.0" stroke="#e0e0e0" stroke-width="1.5" />
<polygon points="382,544.5 382,542 379.5,544.5" fill="#4fc7a0" />
<polygon points="387.9,537.0 390.7,533.9 394.3,533.9 394.3,540.1 390.7,540.1" fill="#d4b95e" />
<polygon points="404.7,537.0 401.9,533.9 398.3,533.9 398.3,540.1 401.9,540.1" fill="#c850e6" />
<g transform="translate(418.7 537.0)" fill="#dcdcdc"><path d="M-2.3 -6 H2.3 V-5 H1.6 L2 -1.4 L3.6 0.6 V1.5 H-3.6 V0.6 L-2 -1.4 L-1.6 -5 H-2.3 Z"/><rect x="-0.5" y="1.5" width="1" height="4.5"/></g>
<circle cx="434.2" cy="532.0" r="0.902" fill="#ddd" />
<circle cx="440.76" cy="532.0" r="0.902" fill="#ddd" />
<circle cx="434.2" cy="537.74" r="0.902" fill="#ddd" />
<path d="M439.67 534.6 L440.572 536.978 L442.95 537.88 L440.572 538.782 L439.67 541.16 L438.76800000000003 538.782 L436.39000000000004 537.88 L438.76800000000003 536.978 Z" fill="#ddd" />
<polygon points="443.36,541.98 443.36,539.52 440.9,541.98" fill="#4fc7a0" />
<path d="M455 533.2 L462.6 540.8 M462.6 533.2 L455 540.8" fill="none" stroke="#d0d0d0" stroke-width="1.1" />
<circle cx="19" cy="561.1" r="4.2" fill="none" stroke="#808080" stroke-width="1" />
<circle cx="19" cy="583.1" r="4.2" fill="none" stroke="#808080" stroke-width="1" />
<circle cx="19" cy="605.1" r="4.2" fill="none" stroke="#808080" stroke-width="1" />
<polygon points="250.6,605 253.4,601.9 257.0,601.9 257.0,608.1 253.4,608.1" fill="#d4b95e" />
<polygon points="269.1,605 266.3,601.9 262.7,601.9 262.7,608.1 266.3,608.1" fill="#8a8a8a" />
<circle cx="19" cy="627.1" r="4.2" fill="none" stroke="#808080" stroke-width="1" />
<circle cx="19" cy="649.1" r="4.2" fill="none" stroke="#808080" stroke-width="1" />
<path d="M181 666 V676.5 M179.5 675 H192" fill="none" stroke="#c8c8c8" stroke-width="1" />
<path d="M183 673 L190.5 667.5" fill="none" stroke="#6cc5b0" stroke-width="1.1" />
<circle cx="19" cy="693.1" r="4.2" fill="none" stroke="#808080" stroke-width="1" />
<path d="M179.5 693.5 L183.2 697.2 L190.5 688.2" fill="none" stroke="#2ecc71" stroke-width="2" />
<circle cx="19" cy="715.1" r="4.2" fill="none" stroke="#808080" stroke-width="1" />
<rect x="502.7" y="89.2" width="1.6" height="1.6" fill="#7a7a7a" />
<rect x="507.7" y="89.2" width="1.6" height="1.6" fill="#7a7a7a" />
<rect x="512.7" y="89.2" width="1.6" height="1.6" fill="#7a7a7a" />
<path d="M504.5 100.5 V116 L508.2 112.8 L510.4 117.8 L512.8 116.8 L510.6 111.9 L515.6 111.5 Z" fill="none" stroke="#2ecc71" stroke-width="1.3" stroke-linejoin="round"/>
<polygon points="504.2,130.8 504.2,150.2 509.8,144.4 518.4,144.4" fill="#e4e4e4" />
<g transform="translate(508.6 170.3) rotate(-42)"><path d="M0 -10 L-5 -1 L-3.6 5 H3.6 L5 -1 Z" fill="#dcdcdc"/><rect x="-4.2" y="6.2" width="8.4" height="2.8" fill="#dcdcdc"/><path d="M0 -10 V-2" stroke="#3c3c3c" stroke-width="1"/><circle cy="-0.8" r="1.5" fill="#3c3c3c"/></g>
<g transform="translate(509.3 199.5) rotate(45)" fill="#d8d8d8"><rect x="-2" y="-11" width="4" height="3" rx="1"/><rect x="-2" y="-7" width="4" height="12.5"/><path d="M-2 6.5 H2 L0 10.5 Z" fill="none" stroke="#d8d8d8" stroke-width="0.8"/></g>
<path d="M499 225.96 Q499 224 500.96 224 H509.78 Q511.74 224 511.74 225.96 V232.82 L509.29 235.76 H500.96 Q499 235.76 499 233.8 Z" fill="#e0e0e0" />
<polygon points="513.21,229.88 519.09,225.47 519.09,234.29" fill="#e0e0e0" />
<rect x="500.96" y="222.04" width="7.84" height="1.18" fill="#e0e0e0" />
<circle cx="502.136" cy="227.332" r="1.176" fill="#2a2a2a" />
<line x1="501" y1="266" x2="516.5" y2="252" stroke="#d0d0d0" stroke-width="1.3" />
<rect x="501.5" y="282.5" width="14.0" height="3.5" fill="#e8e8e8" />
<rect x="506.7" y="282.5" width="3.6" height="14.5" fill="#e8e8e8" />
<polygon points="501.3,311 501.3,322.5 504.8,319 510,319" fill="#e4e4e4" />
<path d="M507 311.8 H515.5 L517.6 327.5 H500.5 L501 324.5" fill="none" stroke="#d8d8d8" stroke-width="1.1" stroke-dasharray="3.2 2.2"/>
<rect x="514.2" y="310.5" width="2.6" height="2.6" fill="#e8e8e8" />
<rect x="516.3000000000001" y="326.2" width="2.6" height="2.6" fill="#e8e8e8" />
<rect x="499.2" y="326.2" width="2.6" height="2.6" fill="#e8e8e8" />
<defs><linearGradient id="gw" x1="0" y1="0" x2="0" y2="1"><stop offset="0" stop-color="#f2f2f2"/><stop offset="1" stop-color="#c4c4c4"/></linearGradient></defs>
<rect x="502" y="343" width="14" height="14" fill="url(#gw)" />
<circle cx="509" cy="380" r="8" fill="url(#gw)" />
<polygon points="508.5,401 517,407.2 513.8,417 503.2,417 500,407.2" fill="url(#gw)" />
<polygon points="508.5,430.8 510.73,436.93 517.25,437.16 512.11,441.17 513.91,447.44 508.5,443.8 503.09,447.44 504.89,441.17 499.75,437.16 506.27,436.93" fill="url(#gw)" />
<path d="M509.4 476.3 A6.3 6.3 0 1 1 515.6 470" fill="none" stroke="#e4e4e4" stroke-width="2.8" />
<path d="M508.5 490 Q509.3 498.2 517.5 499 Q509.3 499.8 508.5 508 Q507.7 499.8 499.5 499 Q507.7 498.2 508.5 490 Z" fill="#e8e8e8" stroke="#e8e8e8" stroke-width="1.2" />
<g transform="translate(508.5 529.5)"><rect x="-1.9" y="-8.6" width="3.8" height="17.2" rx="0.8" fill="#e4e4e4" transform="rotate(0)"/><rect x="-1.9" y="-8.6" width="3.8" height="17.2" rx="0.8" fill="#e4e4e4" transform="rotate(45)"/><rect x="-1.9" y="-8.6" width="3.8" height="17.2" rx="0.8" fill="#e4e4e4" transform="rotate(90)"/><rect x="-1.9" y="-8.6" width="3.8" height="17.2" rx="0.8" fill="#e4e4e4" transform="rotate(135)"/><circle r="6.2" fill="#e4e4e4"/><circle r="2.7" fill="#3c3c3c"/></g>
<path d="M503.3 565.6 L508 570.6 L503.3 575.6 M509.8 565.6 L514.5 570.6 L509.8 575.6" fill="none" stroke="#b0b0b0" stroke-width="1.2" />
<line x1="555.3" y1="119.5" x2="555.3" y2="127" stroke="#a8a8a8" stroke-width="1" />
<line x1="566.7" y1="123.5" x2="566.7" y2="127" stroke="#a8a8a8" stroke-width="1" />
<line x1="578.1" y1="123.5" x2="578.1" y2="127" stroke="#a8a8a8" stroke-width="1" />
<line x1="589.5" y1="123.5" x2="589.5" y2="127" stroke="#a8a8a8" stroke-width="1" />
<line x1="600.9" y1="123.5" x2="600.9" y2="127" stroke="#a8a8a8" stroke-width="1" />
<line x1="612.3" y1="119.5" x2="612.3" y2="127" stroke="#a8a8a8" stroke-width="1" />
<line x1="623.7" y1="123.5" x2="623.7" y2="127" stroke="#a8a8a8" stroke-width="1" />
<line x1="635.1" y1="123.5" x2="635.1" y2="127" stroke="#a8a8a8" stroke-width="1" />
<line x1="646.5" y1="123.5" x2="646.5" y2="127" stroke="#a8a8a8" stroke-width="1" />
<line x1="657.9" y1="123.5" x2="657.9" y2="127" stroke="#a8a8a8" stroke-width="1" />
<line x1="669.3" y1="119.5" x2="669.3" y2="127" stroke="#a8a8a8" stroke-width="1" />
<line x1="680.7" y1="123.5" x2="680.7" y2="127" stroke="#a8a8a8" stroke-width="1" />
<line x1="692.1" y1="123.5" x2="692.1" y2="127" stroke="#a8a8a8" stroke-width="1" />
<line x1="703.5" y1="123.5" x2="703.5" y2="127" stroke="#a8a8a8" stroke-width="1" />
<line x1="714.9" y1="123.5" x2="714.9" y2="127" stroke="#a8a8a8" stroke-width="1" />
<line x1="726.3" y1="119.5" x2="726.3" y2="127" stroke="#a8a8a8" stroke-width="1" />
<line x1="737.7" y1="123.5" x2="737.7" y2="127" stroke="#a8a8a8" stroke-width="1" />
<line x1="749.1" y1="123.5" x2="749.1" y2="127" stroke="#a8a8a8" stroke-width="1" />
<line x1="760.5" y1="123.5" x2="760.5" y2="127" stroke="#a8a8a8" stroke-width="1" />
<line x1="771.9" y1="123.5" x2="771.9" y2="127" stroke="#a8a8a8" stroke-width="1" />
<line x1="783.3" y1="119.5" x2="783.3" y2="127" stroke="#a8a8a8" stroke-width="1" />
<line x1="794.7" y1="123.5" x2="794.7" y2="127" stroke="#a8a8a8" stroke-width="1" />
<line x1="806.1" y1="123.5" x2="806.1" y2="127" stroke="#a8a8a8" stroke-width="1" />
<line x1="817.5" y1="123.5" x2="817.5" y2="127" stroke="#a8a8a8" stroke-width="1" />
<line x1="828.9" y1="123.5" x2="828.9" y2="127" stroke="#a8a8a8" stroke-width="1" />
<line x1="840.3" y1="119.5" x2="840.3" y2="127" stroke="#a8a8a8" stroke-width="1" />
<line x1="851.7" y1="123.5" x2="851.7" y2="127" stroke="#a8a8a8" stroke-width="1" />
<line x1="863.1" y1="123.5" x2="863.1" y2="127" stroke="#a8a8a8" stroke-width="1" />
<line x1="874.5" y1="123.5" x2="874.5" y2="127" stroke="#a8a8a8" stroke-width="1" />
<line x1="885.9" y1="123.5" x2="885.9" y2="127" stroke="#a8a8a8" stroke-width="1" />
<line x1="897.3" y1="119.5" x2="897.3" y2="127" stroke="#a8a8a8" stroke-width="1" />
<line x1="908.7" y1="123.5" x2="908.7" y2="127" stroke="#a8a8a8" stroke-width="1" />
<line x1="920.1" y1="123.5" x2="920.1" y2="127" stroke="#a8a8a8" stroke-width="1" />
<line x1="931.5" y1="123.5" x2="931.5" y2="127" stroke="#a8a8a8" stroke-width="1" />
<line x1="942.9" y1="123.5" x2="942.9" y2="127" stroke="#a8a8a8" stroke-width="1" />
<line x1="954.3" y1="119.5" x2="954.3" y2="127" stroke="#a8a8a8" stroke-width="1" />
<line x1="965.7" y1="123.5" x2="965.7" y2="127" stroke="#a8a8a8" stroke-width="1" />
<line x1="977.1" y1="123.5" x2="977.1" y2="127" stroke="#a8a8a8" stroke-width="1" />
<line x1="988.5" y1="123.5" x2="988.5" y2="127" stroke="#a8a8a8" stroke-width="1" />
<line x1="999.9" y1="123.5" x2="999.9" y2="127" stroke="#a8a8a8" stroke-width="1" />
<line x1="1011.3" y1="119.5" x2="1011.3" y2="127" stroke="#a8a8a8" stroke-width="1" />
<line x1="1022.7" y1="123.5" x2="1022.7" y2="127" stroke="#a8a8a8" stroke-width="1" />
<line x1="1034.1" y1="123.5" x2="1034.1" y2="127" stroke="#a8a8a8" stroke-width="1" />
<line x1="1045.5" y1="123.5" x2="1045.5" y2="127" stroke="#a8a8a8" stroke-width="1" />
<line x1="1056.9" y1="123.5" x2="1056.9" y2="127" stroke="#a8a8a8" stroke-width="1" />
<line x1="1068.3" y1="119.5" x2="1068.3" y2="127" stroke="#a8a8a8" stroke-width="1" />
<line x1="1079.7" y1="123.5" x2="1079.7" y2="127" stroke="#a8a8a8" stroke-width="1" />
<line x1="1091.1" y1="123.5" x2="1091.1" y2="127" stroke="#a8a8a8" stroke-width="1" />
<line x1="1102.5" y1="123.5" x2="1102.5" y2="127" stroke="#a8a8a8" stroke-width="1" />
<line x1="1113.9" y1="123.5" x2="1113.9" y2="127" stroke="#a8a8a8" stroke-width="1" />
<line x1="1125.3" y1="119.5" x2="1125.3" y2="127" stroke="#a8a8a8" stroke-width="1" />
<line x1="1136.7" y1="123.5" x2="1136.7" y2="127" stroke="#a8a8a8" stroke-width="1" />
<line x1="1148.1" y1="123.5" x2="1148.1" y2="127" stroke="#a8a8a8" stroke-width="1" />
<line x1="1159.5" y1="123.5" x2="1159.5" y2="127" stroke="#a8a8a8" stroke-width="1" />
<line x1="1170.9" y1="123.5" x2="1170.9" y2="127" stroke="#a8a8a8" stroke-width="1" />
<line x1="1182.3" y1="119.5" x2="1182.3" y2="127" stroke="#a8a8a8" stroke-width="1" />
<line x1="1193.7" y1="123.5" x2="1193.7" y2="127" stroke="#a8a8a8" stroke-width="1" />
<line x1="1205.1" y1="123.5" x2="1205.1" y2="127" stroke="#a8a8a8" stroke-width="1" />
<line x1="1216.5" y1="123.5" x2="1216.5" y2="127" stroke="#a8a8a8" stroke-width="1" />
<line x1="1227.9" y1="123.5" x2="1227.9" y2="127" stroke="#a8a8a8" stroke-width="1" />
<line x1="1239.3" y1="119.5" x2="1239.3" y2="127" stroke="#a8a8a8" stroke-width="1" />
<line x1="1250.7" y1="123.5" x2="1250.7" y2="127" stroke="#a8a8a8" stroke-width="1" />
<line x1="1262.1" y1="123.5" x2="1262.1" y2="127" stroke="#a8a8a8" stroke-width="1" />
<line x1="1273.5" y1="123.5" x2="1273.5" y2="127" stroke="#a8a8a8" stroke-width="1" />
<line x1="1284.9" y1="123.5" x2="1284.9" y2="127" stroke="#a8a8a8" stroke-width="1" />
<line x1="1296.3" y1="119.5" x2="1296.3" y2="127" stroke="#a8a8a8" stroke-width="1" />
<line x1="1307.7" y1="123.5" x2="1307.7" y2="127" stroke="#a8a8a8" stroke-width="1" />
<line x1="1319.1" y1="123.5" x2="1319.1" y2="127" stroke="#a8a8a8" stroke-width="1" />
<line x1="1330.5" y1="123.5" x2="1330.5" y2="127" stroke="#a8a8a8" stroke-width="1" />
<line x1="1341.9" y1="123.5" x2="1341.9" y2="127" stroke="#a8a8a8" stroke-width="1" />
<line x1="1353.3" y1="119.5" x2="1353.3" y2="127" stroke="#a8a8a8" stroke-width="1" />
<line x1="1364.7" y1="123.5" x2="1364.7" y2="127" stroke="#a8a8a8" stroke-width="1" />
<line x1="1376.1" y1="123.5" x2="1376.1" y2="127" stroke="#a8a8a8" stroke-width="1" />
<line x1="1387.5" y1="123.5" x2="1387.5" y2="127" stroke="#a8a8a8" stroke-width="1" />
<line x1="1398.9" y1="123.5" x2="1398.9" y2="127" stroke="#a8a8a8" stroke-width="1" />
<line x1="1410.3" y1="119.5" x2="1410.3" y2="127" stroke="#a8a8a8" stroke-width="1" />
<line x1="1421.7" y1="123.5" x2="1421.7" y2="127" stroke="#a8a8a8" stroke-width="1" />
<line x1="1433.1" y1="123.5" x2="1433.1" y2="127" stroke="#a8a8a8" stroke-width="1" />
<line x1="1444.5" y1="123.5" x2="1444.5" y2="127" stroke="#a8a8a8" stroke-width="1" />
<line x1="1455.9" y1="123.5" x2="1455.9" y2="127" stroke="#a8a8a8" stroke-width="1" />
<line x1="1467.3" y1="119.5" x2="1467.3" y2="127" stroke="#a8a8a8" stroke-width="1" />
<line x1="1478.7" y1="123.5" x2="1478.7" y2="127" stroke="#a8a8a8" stroke-width="1" />
<line x1="1490.1" y1="123.5" x2="1490.1" y2="127" stroke="#a8a8a8" stroke-width="1" />
<line x1="1501.5" y1="123.5" x2="1501.5" y2="127" stroke="#a8a8a8" stroke-width="1" />
<line x1="1512.9" y1="123.5" x2="1512.9" y2="127" stroke="#a8a8a8" stroke-width="1" />
<line x1="1524.3" y1="119.5" x2="1524.3" y2="127" stroke="#a8a8a8" stroke-width="1" />
<line x1="1535.7" y1="123.5" x2="1535.7" y2="127" stroke="#a8a8a8" stroke-width="1" />
<line x1="1547.1" y1="123.5" x2="1547.1" y2="127" stroke="#a8a8a8" stroke-width="1" />
<line x1="1558.5" y1="123.5" x2="1558.5" y2="127" stroke="#a8a8a8" stroke-width="1" />
<line x1="1569.9" y1="123.5" x2="1569.9" y2="127" stroke="#a8a8a8" stroke-width="1" />
<line x1="1581.3" y1="119.5" x2="1581.3" y2="127" stroke="#a8a8a8" stroke-width="1" />
<line x1="546" y1="137.3" x2="550" y2="137.3" stroke="#a8a8a8" stroke-width="1" />
<line x1="546" y1="148.7" x2="550" y2="148.7" stroke="#a8a8a8" stroke-width="1" />
<line x1="546" y1="160.1" x2="550" y2="160.1" stroke="#a8a8a8" stroke-width="1" />
<line x1="542" y1="171.5" x2="550" y2="171.5" stroke="#a8a8a8" stroke-width="1" />
<line x1="546" y1="182.9" x2="550" y2="182.9" stroke="#a8a8a8" stroke-width="1" />
<line x1="546" y1="194.3" x2="550" y2="194.3" stroke="#a8a8a8" stroke-width="1" />
<line x1="546" y1="205.7" x2="550" y2="205.7" stroke="#a8a8a8" stroke-width="1" />
<line x1="546" y1="217.1" x2="550" y2="217.1" stroke="#a8a8a8" stroke-width="1" />
<line x1="542" y1="228.5" x2="550" y2="228.5" stroke="#a8a8a8" stroke-width="1" />
<line x1="546" y1="239.9" x2="550" y2="239.9" stroke="#a8a8a8" stroke-width="1" />
<line x1="546" y1="251.3" x2="550" y2="251.3" stroke="#a8a8a8" stroke-width="1" />
<line x1="546" y1="262.7" x2="550" y2="262.7" stroke="#a8a8a8" stroke-width="1" />
<line x1="546" y1="274.1" x2="550" y2="274.1" stroke="#a8a8a8" stroke-width="1" />
<line x1="542" y1="285.5" x2="550" y2="285.5" stroke="#a8a8a8" stroke-width="1" />
<line x1="546" y1="296.9" x2="550" y2="296.9" stroke="#a8a8a8" stroke-width="1" />
<line x1="546" y1="308.3" x2="550" y2="308.3" stroke="#a8a8a8" stroke-width="1" />
<line x1="546" y1="319.7" x2="550" y2="319.7" stroke="#a8a8a8" stroke-width="1" />
<line x1="546" y1="331.1" x2="550" y2="331.1" stroke="#a8a8a8" stroke-width="1" />
<line x1="542" y1="342.5" x2="550" y2="342.5" stroke="#a8a8a8" stroke-width="1" />
<line x1="546" y1="353.9" x2="550" y2="353.9" stroke="#a8a8a8" stroke-width="1" />
<line x1="546" y1="365.3" x2="550" y2="365.3" stroke="#a8a8a8" stroke-width="1" />
<line x1="546" y1="376.7" x2="550" y2="376.7" stroke="#a8a8a8" stroke-width="1" />
<line x1="546" y1="388.1" x2="550" y2="388.1" stroke="#a8a8a8" stroke-width="1" />
<line x1="542" y1="399.5" x2="550" y2="399.5" stroke="#a8a8a8" stroke-width="1" />
<line x1="546" y1="410.9" x2="550" y2="410.9" stroke="#a8a8a8" stroke-width="1" />
<line x1="546" y1="422.3" x2="550" y2="422.3" stroke="#a8a8a8" stroke-width="1" />
<line x1="546" y1="433.7" x2="550" y2="433.7" stroke="#a8a8a8" stroke-width="1" />
<line x1="546" y1="445.1" x2="550" y2="445.1" stroke="#a8a8a8" stroke-width="1" />
<line x1="542" y1="456.5" x2="550" y2="456.5" stroke="#a8a8a8" stroke-width="1" />
<line x1="546" y1="467.9" x2="550" y2="467.9" stroke="#a8a8a8" stroke-width="1" />
<line x1="546" y1="479.3" x2="550" y2="479.3" stroke="#a8a8a8" stroke-width="1" />
<line x1="546" y1="490.7" x2="550" y2="490.7" stroke="#a8a8a8" stroke-width="1" />
<line x1="546" y1="502.1" x2="550" y2="502.1" stroke="#a8a8a8" stroke-width="1" />
<line x1="542" y1="513.5" x2="550" y2="513.5" stroke="#a8a8a8" stroke-width="1" />
<line x1="546" y1="524.9" x2="550" y2="524.9" stroke="#a8a8a8" stroke-width="1" />
<line x1="546" y1="536.3" x2="550" y2="536.3" stroke="#a8a8a8" stroke-width="1" />
<line x1="546" y1="547.7" x2="550" y2="547.7" stroke="#a8a8a8" stroke-width="1" />
<path d="M601.0 567.6999999999999 L604.5 570.5 L608.0 567.6999999999999" fill="none" stroke="#d0d0d0" stroke-width="1.1" />
<line x1="885.5" y1="560.8" x2="885.5" y2="577.2" stroke="#3a3a3a" stroke-width="1" />
<line x1="905.5" y1="560.8" x2="905.5" y2="577.2" stroke="#3a3a3a" stroke-width="1" />
<line x1="925.5" y1="560.8" x2="925.5" y2="577.2" stroke="#3a3a3a" stroke-width="1" />
<line x1="945.5" y1="560.8" x2="945.5" y2="577.2" stroke="#3a3a3a" stroke-width="1" />
<rect x="870.5" y="564" width="1.8" height="10" fill="#e4e4e4" />
<polygon points="880.5,564 880.5,574 873.5,569" fill="#e4e4e4" />
<polygon points="898,564 898,574 891,569" fill="#e4e4e4" />
<rect x="899.5" y="564" width="1.8" height="10" fill="#e4e4e4" />
<polygon points="912,563.5 912,574.5 920.5,569" fill="#e4e4e4" />
<rect x="930" y="564" width="1.8" height="10" fill="#e4e4e4" />
<polygon points="933.3,564 933.3,574 940.3,569" fill="#e4e4e4" />
<polygon points="950.5,564 950.5,574 957.5,569" fill="#e4e4e4" />
<rect x="958.8" y="564" width="1.8" height="10" fill="#e4e4e4" />
<path d="M981 566.3 H976.5 Q975 566.3 975 567.8 V572.5 Q975 574 976.5 574 H985.5 Q987 574 987 572.5 V569" fill="none" stroke="#e4e4e4" stroke-width="1.3" />
<polygon points="981.5,563 986.5,566.3 981.5,569.6" fill="#e4e4e4" />
<path d="M1233.5 569 L1237.1 565.2 H1247.5 V572.8 H1237.1 Z" fill="#d8d8d8" />
<circle cx="1238.5" cy="569" r="1.6" fill="#2a2a2a" />
<line x1="1290.5" y1="561" x2="1290.5" y2="577" stroke="#333" stroke-width="1" />
<path d="M1294.5 565.8 L1299.1 569 L1294.5 572.2 Z" fill="none" stroke="#8a8a8a" stroke-width="0.9" />
<polygon points="1275.5,566.5 1278.5,566.5 1282.5,563 1282.5,575 1278.5,571.5 1275.5,571.5" fill="#2ecc71" />
<path d="M1284.5 566 A3.6 3.6 0 0 1 1284.5 572" fill="none" stroke="#2ecc71" stroke-width="1.1" />
<path d="M1286.4 563.6 A6.4 6.4 0 0 1 1286.4 574.4" fill="none" stroke="#2ecc71" stroke-width="1.1" />
<line x1="1326.0" y1="561" x2="1326.0" y2="577" stroke="#333" stroke-width="1" />
<path d="M1330.0 565.8 L1334.6 569 L1330.0 572.2 Z" fill="none" stroke="#8a8a8a" stroke-width="0.9" />
<path d="M1313 566.5 A4.2 4.2 0 0 1 1320.4 563.6 L1324.2 568.8 M1313 566.5 L1316.3 573.5" fill="none" stroke="#e0e0e0" stroke-width="2.2" />
<line x1="1361.0" y1="561" x2="1361.0" y2="577" stroke="#333" stroke-width="1" />
<path d="M1365.0 565.8 L1369.6 569 L1365.0 572.2 Z" fill="none" stroke="#8a8a8a" stroke-width="0.9" />
<line x1="1349.4" y1="562.5" x2="1349.4" y2="575.5" stroke="#e4e4e4" stroke-width="1.1" />
<line x1="1345.5" y1="566.4" x2="1358.5" y2="566.4" stroke="#e4e4e4" stroke-width="1.1" />
<line x1="1354.6" y1="562.5" x2="1354.6" y2="575.5" stroke="#e4e4e4" stroke-width="1.1" />
<line x1="1345.5" y1="571.6" x2="1358.5" y2="571.6" stroke="#e4e4e4" stroke-width="1.1" />
<rect x="1380.5" y="563.5" width="3.0" height="3.0" fill="#2ecc71" />
<rect x="1380.5" y="568" width="3.0" height="6.5" fill="#2ecc71" />
<rect x="1385.5" y="564" width="8.0" height="4.3" fill="none" stroke="#2ecc71" stroke-width="1.1" />
<rect x="1385" y="570.3" width="9" height="4.2" fill="#2ecc71" />
<polygon points="1403.5,564.5 1407,569 1403.5,573.5" fill="#e4e4e4" />
<path d="M1407.8 564.5 L1411.6 569 L1407.8 573.5" fill="none" stroke="#e4e4e4" stroke-width="1.3" />
<path d="M1412.0 564.5 L1415.8 569 L1412.0 573.5" fill="none" stroke="#e4e4e4" stroke-width="1.3" />
<line x1="1442.0" y1="561" x2="1442.0" y2="577" stroke="#333" stroke-width="1" />
<path d="M1446.0 565.8 L1450.6 569 L1446.0 572.2 Z" fill="none" stroke="#8a8a8a" stroke-width="0.9" />
<rect x="1427.1" y="563.9" width="12.3" height="7.9" fill="none" stroke="#e4e4e4" stroke-width="1.2" />
<rect x="1426.5" y="572.4" width="13.5" height="2.4" fill="#e4e4e4" />
<rect x="1427.8" y="564.6" width="10.9" height="6.6" fill="#2a2a2a" />
<line x1="1476.5" y1="561" x2="1476.5" y2="577" stroke="#333" stroke-width="1" />
<path d="M1480.5 565.8 L1485.1 569 L1480.5 572.2 Z" fill="none" stroke="#8a8a8a" stroke-width="0.9" />
<rect x="1461.5" y="563.5" width="7.5" height="5.0" fill="none" stroke="#d8d8d8" stroke-width="1" />
<path d="M1464 570.5 H1471.5 V565.5 M1466.5 572.5 H1474 V567.5 M1469 574.5 H1476.5 V569.5" fill="none" stroke="#b0b0b0" stroke-width="1" />
<line x1="1511.5" y1="561" x2="1511.5" y2="577" stroke="#333" stroke-width="1" />
<path d="M1515.5 565.8 L1520.1 569 L1515.5 572.2 Z" fill="none" stroke="#8a8a8a" stroke-width="0.9" />
<rect x="1496" y="562.5" width="8.5" height="8.5" fill="#d0d0d0" />
<rect x="1500.5" y="567" width="9.0" height="9" fill="#4e4e4e" stroke="#e8e8e8" stroke-width="1.1" />
<line x1="1546.5" y1="561" x2="1546.5" y2="577" stroke="#333" stroke-width="1" />
<path d="M1550.5 565.8 L1555.1 569 L1550.5 572.2 Z" fill="none" stroke="#8a8a8a" stroke-width="0.9" />
<rect x="1531.5" y="562.7" width="2.5" height="2.5" fill="#2ecc71" />
<rect x="1531.5" y="567.7" width="2.5" height="2.5" fill="#2ecc71" />
<rect x="1531.5" y="572.7" width="2.5" height="2.5" fill="#2ecc71" />
<rect x="1534.0" y="565.2" width="2.5" height="2.5" fill="#2ecc71" />
<rect x="1534.0" y="570.2" width="2.5" height="2.5" fill="#2ecc71" />
<rect x="1536.5" y="562.7" width="2.5" height="2.5" fill="#2ecc71" />
<rect x="1536.5" y="567.7" width="2.5" height="2.5" fill="#2ecc71" />
<rect x="1536.5" y="572.7" width="2.5" height="2.5" fill="#2ecc71" />
<rect x="1539.0" y="565.2" width="2.5" height="2.5" fill="#2ecc71" />
<rect x="1539.0" y="570.2" width="2.5" height="2.5" fill="#2ecc71" />
<rect x="1541.5" y="562.7" width="2.5" height="2.5" fill="#2ecc71" />
<rect x="1541.5" y="567.7" width="2.5" height="2.5" fill="#2ecc71" />
<rect x="1541.5" y="572.7" width="2.5" height="2.5" fill="#2ecc71" />
<g transform="translate(1573 569)"><rect x="-1.5" y="-6.6" width="3" height="13.2" rx="0.6" fill="#e4e4e4" transform="rotate(0)"/><rect x="-1.5" y="-6.6" width="3" height="13.2" rx="0.6" fill="#e4e4e4" transform="rotate(45)"/><rect x="-1.5" y="-6.6" width="3" height="13.2" rx="0.6" fill="#e4e4e4" transform="rotate(90)"/><rect x="-1.5" y="-6.6" width="3" height="13.2" rx="0.6" fill="#e4e4e4" transform="rotate(135)"/><circle r="4.7" fill="#e4e4e4"/><circle r="2.2" fill="#2a2a2a"/></g>
<circle cx="1745" cy="175.8" r="5.8" fill="none" stroke="#e8e8e8" stroke-width="1" />
<circle cx="1833" cy="220" r="5.8" fill="none" stroke="#f4f4f4" stroke-width="1" />
<g transform="translate(1876 338)"><path d="M1 11.5 L1.5 9.5 L6.8 4.2 L8.3 5.7 L3 11 Z" fill="none" stroke="#c8c8c8" stroke-width="1"/><path d="M6.5 2.6 L9.9 6 L10.8 5.1 L9.9 4.2 L11.4 2.7 A1.5 1.5 0 0 0 9.3 0.6 L7.8 2.1 L6.9 1.2 Z" fill="#c8c8c8"/></g>
<path d="M1637.0 367.7 L1640.5 370.50000000000006 L1644.0 367.7" fill="none" stroke="#d0d0d0" stroke-width="1.1" />
<circle cx="1834" cy="392" r="5.3" fill="#6cc5b0" />
<circle cx="1834" cy="392" r="2.3" fill="#4fae98" />
<line x1="1606.5" y1="435.3" x2="1606.5" y2="445.3" stroke="#2ecc71" stroke-width="1.6" />
<line x1="1609.8" y1="435.3" x2="1609.8" y2="445.3" stroke="#2ecc71" stroke-width="1.6" />
<line x1="1613.1" y1="435.3" x2="1613.1" y2="445.3" stroke="#2ecc71" stroke-width="1.6" />
<line x1="1615.2" y1="435.5" x2="1617.5" y2="445.3" stroke="#2ecc71" stroke-width="1.6" />
<path d="M1671 436.3 Q1671 435.3 1672 435.3 H1676.5 L1678 437.3 H1680.5 V438.3 H1671 Z" fill="#c8c8c8" />
<rect x="1671" y="439.1" width="10.5" height="6.0" fill="#c8c8c8" rx="0.8" />
<line x1="1673" y1="440.5" x2="1674.2" y2="440.5" stroke="#585858" stroke-width="1" />
<line x1="1675.2" y1="440.5" x2="1680" y2="440.5" stroke="#585858" stroke-width="1" />
<line x1="1673" y1="442.8" x2="1674.2" y2="442.8" stroke="#585858" stroke-width="1" />
<line x1="1675.2" y1="442.8" x2="1680" y2="442.8" stroke="#585858" stroke-width="1" />
<path d="M1738.5 435.5 H1743 L1746 438.5 V445.5 H1738.5 Z M1743 435.5 V438.5 H1746" fill="none" stroke="#c8c8c8" stroke-width="1.1" />
<path d="M1804 435.5 H1808.5 A3 3 0 0 1 1811.5 438.5 V441.5 L1807.5 445.5 H1804 A3 3 0 0 1 1801 442.5 V438.5 A3 3 0 0 1 1804 435.5 Z" fill="none" stroke="#c8c8c8" stroke-width="1.1" />
<polygon points="1811.5,441.5 1807.5,445.5 1807.5,441.5" fill="#c8c8c8" />
<rect x="1863" y="436.3" width="3.6" height="3.6" fill="#2ecc71" rx="0.5" />
<rect x="1863" y="441.3" width="3.6" height="3.6" fill="#2ecc71" rx="0.5" />
<rect x="1868" y="436.3" width="3.6" height="3.6" fill="#2ecc71" rx="0.5" />
<rect x="1868" y="441.3" width="3.6" height="3.6" fill="#2ecc71" rx="0.5" />
<line x1="1880.5" y1="437" x2="1891" y2="437" stroke="#dcdcdc" stroke-width="1.1" />
<line x1="1880.5" y1="440.3" x2="1891" y2="440.3" stroke="#dcdcdc" stroke-width="1.1" />
<line x1="1880.5" y1="443.6" x2="1891" y2="443.6" stroke="#dcdcdc" stroke-width="1.1" />
<path d="M1861.0 460.4 L1864.5 463.20000000000005 L1868.0 460.4" fill="none" stroke="#d0d0d0" stroke-width="1.1" />
<rect x="1879" y="460.7" width="2" height="1.6" fill="#d0d0d0" />
<rect x="1885" y="460.7" width="2" height="1.6" fill="#d0d0d0" />
<rect x="1891" y="460.7" width="2" height="1.6" fill="#d0d0d0" />
<line x1="1808.5" y1="523.5" x2="1808.5" y2="539.0" stroke="#3c3c3c" stroke-width="1" />
<line x1="1826.5" y1="523.5" x2="1826.5" y2="539.0" stroke="#3c3c3c" stroke-width="1" />
<line x1="1793.5" y1="525.3" x2="1793.5" y2="537.3" stroke="#e4e4e4" stroke-width="1.1" />
<line x1="1796" y1="528.8" x2="1802" y2="528.8" stroke="#e4e4e4" stroke-width="1.6" />
<line x1="1796" y1="533.8" x2="1806" y2="533.8" stroke="#e4e4e4" stroke-width="1.6" />
<line x1="1817.5" y1="524.8" x2="1817.5" y2="537.8" stroke="#e4e4e4" stroke-width="1.1" />
<line x1="1814" y1="528.8" x2="1821" y2="528.8" stroke="#e4e4e4" stroke-width="1.6" />
<line x1="1812" y1="533.8" x2="1823" y2="533.8" stroke="#e4e4e4" stroke-width="1.6" />
<line x1="1841" y1="525.3" x2="1841" y2="537.3" stroke="#e4e4e4" stroke-width="1.1" />
<line x1="1832.5" y1="528.8" x2="1838.5" y2="528.8" stroke="#e4e4e4" stroke-width="1.6" />
<line x1="1828.5" y1="533.8" x2="1838.5" y2="533.8" stroke="#e4e4e4" stroke-width="1.6" />
<line x1="1870.5" y1="523.5" x2="1870.5" y2="539.0" stroke="#3c3c3c" stroke-width="1" />
<line x1="1888.5" y1="523.5" x2="1888.5" y2="539.0" stroke="#3c3c3c" stroke-width="1" />
<line x1="1855.5" y1="525.5" x2="1867.5" y2="525.5" stroke="#e4e4e4" stroke-width="1.1" />
<line x1="1859" y1="527.5" x2="1859" y2="538" stroke="#e4e4e4" stroke-width="1.6" />
<line x1="1864" y1="527.5" x2="1864" y2="534" stroke="#e4e4e4" stroke-width="1.6" />
<line x1="1873" y1="531.3" x2="1886" y2="531.3" stroke="#e4e4e4" stroke-width="1.1" />
<line x1="1877" y1="525.8" x2="1877" y2="536.8" stroke="#e4e4e4" stroke-width="1.6" />
<line x1="1882" y1="527.8" x2="1882" y2="534.8" stroke="#e4e4e4" stroke-width="1.6" />
<line x1="1891.5" y1="538" x2="1903.5" y2="538" stroke="#e4e4e4" stroke-width="1.1" />
<line x1="1895" y1="530" x2="1895" y2="536.5" stroke="#e4e4e4" stroke-width="1.6" />
<line x1="1900" y1="525.5" x2="1900" y2="536.5" stroke="#e4e4e4" stroke-width="1.6" />
<line x1="1808.5" y1="551.5" x2="1808.5" y2="567.0" stroke="#3c3c3c" stroke-width="1" />
<line x1="1826.5" y1="551.5" x2="1826.5" y2="567.0" stroke="#3c3c3c" stroke-width="1" />
<line x1="1793.5" y1="552.8" x2="1793.5" y2="565.8" stroke="#e4e4e4" stroke-width="1.1" />
<line x1="1804.5" y1="552.8" x2="1804.5" y2="565.8" stroke="#e4e4e4" stroke-width="1.1" />
<line x1="1799" y1="555.3" x2="1799" y2="563.3" stroke="#e4e4e4" stroke-width="1.8" />
<line x1="1811" y1="553.8" x2="1824.5" y2="553.8" stroke="#e4e4e4" stroke-width="1.1" />
<line x1="1811" y1="564.8" x2="1824.5" y2="564.8" stroke="#e4e4e4" stroke-width="1.1" />
<line x1="1813.5" y1="559.3" x2="1822" y2="559.3" stroke="#e4e4e4" stroke-width="1.8" />
<path d="M1829 555.3 V552.8 H1831.5 M1839.5 552.8 H1842 V555.3 M1842 563.3 V565.8 H1839.5 M1831.5 565.8 H1829 V563.3" fill="none" stroke="#e4e4e4" stroke-width="1.2" />
<rect x="1831.5" y="559.8" width="1.8" height="3.5" fill="#e4e4e4" />
<rect x="1835" y="557.3" width="1.8" height="3.5" fill="#e4e4e4" />
<rect x="1838.5" y="555.3" width="1.8" height="3.5" fill="#e4e4e4" />
<circle cx="504.5" cy="641.5" r="4" fill="none" stroke="#ddd" stroke-width="1.1" />
<line x1="507.6" y1="644.6" x2="510.5" y2="647.5" stroke="#ddd" stroke-width="1.8" />
<path d="M997 637 V647 M992 642 H1002" fill="none" stroke="#f0f0f0" stroke-width="1.7" />
<polygon points="1005.3,650.3 1005.3,648 1003,650.3" fill="#4fc7a0" />
<g fill="none" stroke="#8a8a8a" stroke-width="1"><path d="M1034 644 A5 5 0 0 0 1040 648.5"/><path d="M1035.5 641.5 A5 5 0 0 0 1042 646.5"/></g>
<circle cx="1044.3" cy="639.2" r="4" fill="#d8d8d8" />
<circle cx="1058.0" cy="636.5" r="0.9900000000000001" fill="#ddd" />
<circle cx="1065.2" cy="636.5" r="0.9900000000000001" fill="#ddd" />
<circle cx="1058.0" cy="642.8" r="0.9900000000000001" fill="#ddd" />
<path d="M1064.15 639.5 L1065.14 642.11 L1067.75 643.1 L1065.14 644.09 L1064.15 646.7 L1063.16 644.09 L1060.5500000000002 643.1 L1063.16 642.11 Z" fill="#ddd" />
<polygon points="1068.2,647.6 1068.2,644.9 1065.5,647.6" fill="#4fc7a0" />
<line x1="1078" y1="637" x2="1091.5" y2="637" stroke="#d8d8d8" stroke-width="1" />
<circle cx="1083" cy="637" r="1.7" fill="#2a2a2a" stroke="#d8d8d8" stroke-width="1" />
<line x1="1078" y1="642" x2="1091.5" y2="642" stroke="#d8d8d8" stroke-width="1" />
<circle cx="1087" cy="642" r="1.7" fill="#2a2a2a" stroke="#d8d8d8" stroke-width="1" />
<line x1="1078" y1="647" x2="1091.5" y2="647" stroke="#d8d8d8" stroke-width="1" />
<circle cx="1083" cy="647" r="1.7" fill="#2a2a2a" stroke="#d8d8d8" stroke-width="1" />
<polygon points="1093.3,650.3 1093.3,648 1091,650.3" fill="#4fc7a0" />
<rect x="501" y="662.0" width="8" height="6.5" fill="#c4c4c4" rx="0.8" />
<path d="M502.7 662.0 V659.7 A2.3 2.3 0 0 1 507.3 659.7 V662.0" fill="none" stroke="#c4c4c4" stroke-width="1.2" />
<rect x="504.4" y="664.3" width="1.2" height="2.0" fill="#444" />
<path d="M517.3 662.5 Q523.8 655.9 530.3 662.5 Q523.8 669.1 517.3 662.5 Z" fill="none" stroke="#c8c8c8" stroke-width="1.1" />
<circle cx="523.8" cy="662.5" r="2.4" fill="#c8c8c8" />
<g transform="translate(542.8 662.5)" fill="none" stroke="#c4c4c4" stroke-width="1.1" stroke-linejoin="round"><path d="M0 -6.5 L5.6 -3.4 V3.2 L0 6.5 L-5.6 3.2 V-3.4 Z"/><path d="M-5.6 -3.4 L0 -0.2 L5.6 -3.4 M0 -0.2 V6.5"/></g>
<polygon points="556,660.3 558.6,660.3 562.2,657.0 562.2,668.0 558.6,664.7 556,664.7" fill="#c4c4c4" />
<path d="M564 659.5 A3.6 3.6 0 0 1 564 665.5" fill="none" stroke="#c4c4c4" stroke-width="1.1" />
<path d="M565.8 657.3 A6.2 6.2 0 0 1 565.8 667.7" fill="none" stroke="#c4c4c4" stroke-width="1.1" />
<g transform="translate(575 656.0)"><path d="M1 11.5 L1.5 9.5 L6.8 4.2 L8.3 5.7 L3 11 Z" fill="none" stroke="#b8b8b8" stroke-width="1"/><path d="M6.5 2.6 L9.9 6 L10.8 5.1 L9.9 4.2 L11.4 2.7 A1.5 1.5 0 0 0 9.3 0.6 L7.8 2.1 L6.9 1.2 Z" fill="#b8b8b8"/></g>
<path d="M593.2 662.5 L596.8000000000001 658.7 H607.2 V666.3 H596.8000000000001 Z" fill="#c4c4c4" />
<circle cx="598.2" cy="662.5" r="1.6" fill="#2a2a2a" />
<path d="M528.5 682.4 A4.6 4.6 0 1 1 526.2 679.4" fill="none" stroke="#d8d8d8" stroke-width="1.1" />
<path d="M521.8000000000001 683.0 L523.9 685.3 L528.7 679.5" fill="none" stroke="#d8d8d8" stroke-width="1.4" />
<path d="M593.2 683.3 L596.8000000000001 679.5 H607.2 V687.0999999999999 H596.8000000000001 Z" fill="#d0d0d0" />
<circle cx="598.2" cy="683.3" r="1.6" fill="#2a2a2a" />
<rect x="654.9" y="676.5" width="4.4" height="13.5" fill="#8fd890" />
<rect x="651.7" y="684.0" width="4.0" height="6.0" fill="#d4d4d4" />
<polygon points="1140.9,682.9 1143.7,679.8 1147.3,679.8 1147.3,686.0 1143.7,686.0" fill="#d4b95e" />
<polygon points="1157.7,682.9 1154.9,679.8 1151.3,679.8 1151.3,686.0 1154.9,686.0" fill="#c850e6" />
<circle cx="1170" cy="682.9" r="4.3" fill="none" stroke="#828282" stroke-width="1" />
<path d="M528.5 704.4 A4.6 4.6 0 1 1 526.2 701.4" fill="none" stroke="#d8d8d8" stroke-width="1.1" />
<path d="M521.8000000000001 705.0 L523.9 707.3 L528.7 701.5" fill="none" stroke="#d8d8d8" stroke-width="1.4" />
<path d="M593.2 705.3 L596.8000000000001 701.5 H607.2 V709.0999999999999 H596.8000000000001 Z" fill="#d0d0d0" />
<circle cx="598.2" cy="705.3" r="1.6" fill="#2a2a2a" />
<line x1="652.1" y1="703.6999999999999" x2="658.1" y2="703.6999999999999" stroke="#8fc8f8" stroke-width="1" />
<line x1="652.1" y1="706.9" x2="658.1" y2="706.9" stroke="#8fc8f8" stroke-width="1" />
<polygon points="1140.9,704.9 1143.7,701.8 1147.3,701.8 1147.3,708.0 1143.7,708.0" fill="#d4b95e" />
<polygon points="1157.7,704.9 1154.9,701.8 1151.3,701.8 1151.3,708.0 1154.9,708.0" fill="#c850e6" />
<circle cx="1170" cy="704.9" r="4.3" fill="none" stroke="#828282" stroke-width="1" />
<path d="M528.5 726.4 A4.6 4.6 0 1 1 526.2 723.4" fill="none" stroke="#d8d8d8" stroke-width="1.1" />
<path d="M521.8000000000001 727.0 L523.9 729.3 L528.7 723.5" fill="none" stroke="#d8d8d8" stroke-width="1.4" />
<path d="M593.2 727.3 L596.8000000000001 723.5 H607.2 V731.0999999999999 H596.8000000000001 Z" fill="#d0d0d0" />
<circle cx="598.2" cy="727.3" r="1.6" fill="#2a2a2a" />
<line x1="652.1" y1="725.6999999999999" x2="658.1" y2="725.6999999999999" stroke="#8fc8f8" stroke-width="1" />
<line x1="652.1" y1="728.9" x2="658.1" y2="728.9" stroke="#8fc8f8" stroke-width="1" />
<polygon points="1140.9,726.9 1143.7,723.8 1147.3,723.8 1147.3,730.0 1143.7,730.0" fill="#d4b95e" />
<polygon points="1157.7,726.9 1154.9,723.8 1151.3,723.8 1151.3,730.0 1154.9,730.0" fill="#c850e6" />
<circle cx="1170" cy="726.9" r="4.3" fill="none" stroke="#828282" stroke-width="1" />
<path d="M517.3 749.3 Q523.8 742.6999999999999 530.3 749.3 Q523.8 755.9 517.3 749.3 Z" fill="none" stroke="#d0d0d0" stroke-width="1.1" />
<circle cx="523.8" cy="749.3" r="2.4" fill="#d0d0d0" />
<path d="M593.2 749.3 L596.8000000000001 745.5 H607.2 V753.0999999999999 H596.8000000000001 Z" fill="#d0d0d0" />
<circle cx="598.2" cy="749.3" r="1.6" fill="#2a2a2a" />
<path d="M616.5 745.8 L619.8 749.3 L616.5 752.8" fill="none" stroke="#8a8a8a" stroke-width="1.1" />
<path d="M647.8 744.4 Q647.8 743.4 648.8 743.4 H653.3 L654.8 745.4 H661.0 V746.4 H647.8 Z" fill="#c8c8c8" />
<rect x="647.8" y="747.1999999999999" width="14.2" height="7.8" fill="#c8c8c8" rx="0.8" />
<circle cx="1170" cy="748.9" r="4.3" fill="none" stroke="#828282" stroke-width="1" />
<path d="M517.3 771.3 Q523.8 764.6999999999999 530.3 771.3 Q523.8 777.9 517.3 771.3 Z" fill="none" stroke="#d0d0d0" stroke-width="1.1" />
<circle cx="523.8" cy="771.3" r="2.4" fill="#d0d0d0" />
<path d="M593.2 771.3 L596.8000000000001 767.5 H607.2 V775.0999999999999 H596.8000000000001 Z" fill="#d0d0d0" />
<circle cx="598.2" cy="771.3" r="1.6" fill="#2a2a2a" />
<path d="M614.3000000000001 770.0999999999999 L617.7 773.1 L621.1 770.0999999999999" fill="none" stroke="#8a8a8a" stroke-width="1.1" />
<path d="M647.8 766.4 Q647.8 765.4 648.8 765.4 H653.3 L654.8 767.4 H661.0 V768.4 H647.8 Z" fill="#c8c8c8" />
<rect x="647.8" y="769.1999999999999" width="14.2" height="7.8" fill="#c8c8c8" rx="0.8" />
<circle cx="1170" cy="770.9" r="4.3" fill="none" stroke="#828282" stroke-width="1" />
<path d="M528.5 792.4 A4.6 4.6 0 1 1 526.2 789.4" fill="none" stroke="#d8d8d8" stroke-width="1.1" />
<path d="M521.8000000000001 793.0 L523.9 795.3 L528.7 789.5" fill="none" stroke="#d8d8d8" stroke-width="1.4" />
<path d="M593.2 793.3 L596.8000000000001 789.5 H607.2 V797.0999999999999 H596.8000000000001 Z" fill="#d0d0d0" />
<circle cx="598.2" cy="793.3" r="1.6" fill="#2a2a2a" />
<rect x="673.9" y="786.5" width="4.4" height="13.5" fill="#8fd890" />
<rect x="670.7" y="794.0" width="4.0" height="6.0" fill="#d4d4d4" />
<polygon points="1140.9,792.9 1143.7,789.8 1147.3,789.8 1147.3,796.0 1143.7,796.0" fill="#d4b95e" />
<polygon points="1157.7,792.9 1154.9,789.8 1151.3,789.8 1151.3,796.0 1154.9,796.0" fill="#c850e6" />
<circle cx="1170" cy="792.9" r="4.3" fill="none" stroke="#828282" stroke-width="1" />
<path d="M517.3 815.3 Q523.8 808.6999999999999 530.3 815.3 Q523.8 821.9 517.3 815.3 Z" fill="none" stroke="#d0d0d0" stroke-width="1.1" />
<circle cx="523.8" cy="815.3" r="2.4" fill="#d0d0d0" />
<path d="M593.2 815.3 L596.8000000000001 811.5 H607.2 V819.0999999999999 H596.8000000000001 Z" fill="#d0d0d0" />
<circle cx="598.2" cy="815.3" r="1.6" fill="#2a2a2a" />
<rect x="667.5" y="809.3" width="1.6" height="1.6" fill="#e6d46e" />
<rect x="667.5" y="814.3" width="1.6" height="1.6" fill="#e6d46e" />
<rect x="667.5" y="819.3" width="1.6" height="1.6" fill="#e6d46e" />
<rect x="672.5" y="809.3" width="1.6" height="1.6" fill="#e6d46e" />
<rect x="672.5" y="814.3" width="1.6" height="1.6" fill="#e6d46e" />
<rect x="672.5" y="819.3" width="1.6" height="1.6" fill="#e6d46e" />
<rect x="677.5" y="809.3" width="1.6" height="1.6" fill="#e6d46e" />
<rect x="677.5" y="814.3" width="1.6" height="1.6" fill="#e6d46e" />
<rect x="677.5" y="819.3" width="1.6" height="1.6" fill="#e6d46e" />
<polygon points="1140.9,814.9 1143.7,811.8 1147.3,811.8 1147.3,818.0 1143.7,818.0" fill="#d4b95e" />
<polygon points="1157.7,814.9 1154.9,811.8 1151.3,811.8 1151.3,818.0 1154.9,818.0" fill="#c850e6" />
<circle cx="1170" cy="814.9" r="4.3" fill="none" stroke="#828282" stroke-width="1" />
<path d="M593.2 837.3 L596.8000000000001 833.5 H607.2 V841.0999999999999 H596.8000000000001 Z" fill="#d0d0d0" />
<circle cx="598.2" cy="837.3" r="1.6" fill="#2a2a2a" />
<rect x="666.8" y="836.2" width="1.8" height="1.6" fill="#e6d46e" />
<line x1="670.5" y1="836.8" x2="676.5" y2="836.8" stroke="#d8d8d8" stroke-width="1.2" />
<rect x="678.5" y="836.2" width="1.8" height="1.6" fill="#e6d46e" />
<polygon points="1140.9,836.9 1143.7,833.8 1147.3,833.8 1147.3,840.0 1143.7,840.0" fill="#d4b95e" />
<polygon points="1157.7,836.9 1154.9,833.8 1151.3,833.8 1151.3,840.0 1154.9,840.0" fill="#c850e6" />
<circle cx="1170" cy="836.9" r="4.3" fill="none" stroke="#828282" stroke-width="1" />
<path d="M517.3 859.3 Q523.8 852.6999999999999 530.3 859.3 Q523.8 865.9 517.3 859.3 Z" fill="none" stroke="#d0d0d0" stroke-width="1.1" />
<circle cx="523.8" cy="859.3" r="2.4" fill="#d0d0d0" />
<path d="M593.2 859.3 L596.8000000000001 855.5 H607.2 V863.0999999999999 H596.8000000000001 Z" fill="#d0d0d0" />
<circle cx="598.2" cy="859.3" r="1.6" fill="#2a2a2a" />
<path d="M614.3000000000001 858.0999999999999 L617.7 861.1 L621.1 858.0999999999999" fill="none" stroke="#8a8a8a" stroke-width="1.1" />
<circle cx="633.7" cy="859.3" r="3" fill="#e0e0e0" />
<rect x="649.2" y="853.4" width="11.2" height="11.2" fill="none" stroke="#e6d46e" stroke-width="1.1" stroke-dasharray="7 4.2" stroke-dashoffset="-2.1"/>
<rect x="648.4" y="852.6" width="1.6" height="1.6" fill="#e0e0e0" />
<rect x="648.4" y="863.8000000000001" width="1.6" height="1.6" fill="#e0e0e0" />
<rect x="659.6" y="852.6" width="1.6" height="1.6" fill="#e0e0e0" />
<rect x="659.6" y="863.8000000000001" width="1.6" height="1.6" fill="#e0e0e0" />
<polygon points="1140.9,858.9 1143.7,855.8 1147.3,855.8 1147.3,862.0 1143.7,862.0" fill="#8a8a8a" />
<polygon points="1157.7,858.9 1154.9,855.8 1151.3,855.8 1151.3,862.0 1154.9,862.0" fill="#c850e6" />
<circle cx="1170" cy="858.9" r="4.3" fill="none" stroke="#828282" stroke-width="1" />
<polygon points="1156.5,877 1160.5,881 1156.5,885 1152.5,881" fill="#2ecc71" />
<polygon points="1172.9,881 1170.1,877.9 1166.5,877.9 1166.5,884.1 1170.1,884.1" fill="#8a8a8a" />
<line x1="635" y1="881.5" x2="643" y2="881.5" stroke="#c8c8c8" stroke-width="1" stroke-dasharray="1 1" shape-rendering="crispEdges"/>
<polygon points="1156.5,899 1160.5,903 1156.5,907 1152.5,903" fill="#c8c8c8" />
<polygon points="1172.9,903 1170.1,899.9 1166.5,899.9 1166.5,906.1 1170.1,906.1" fill="#c850e6" />
<line x1="635" y1="903.5" x2="643" y2="903.5" stroke="#c8c8c8" stroke-width="1" stroke-dasharray="1 1" shape-rendering="crispEdges"/>
<polygon points="1156.5,921 1160.5,925 1156.5,929 1152.5,925" fill="#c8c8c8" />
<polygon points="1172.9,925 1170.1,921.9 1166.5,921.9 1166.5,928.1 1170.1,928.1" fill="#c850e6" />
<line x1="635" y1="925.5" x2="643" y2="925.5" stroke="#c8c8c8" stroke-width="1" stroke-dasharray="1 1" shape-rendering="crispEdges"/>
<path d="M517.3 947.3 Q523.8 940.6999999999999 530.3 947.3 Q523.8 953.9 517.3 947.3 Z" fill="none" stroke="#d0d0d0" stroke-width="1.1" />
<circle cx="523.8" cy="947.3" r="2.4" fill="#d0d0d0" />
<path d="M593.2 947.3 L596.8000000000001 943.5 H607.2 V951.0999999999999 H596.8000000000001 Z" fill="#d0d0d0" />
<circle cx="598.2" cy="947.3" r="1.6" fill="#2a2a2a" />
<rect x="649.2" y="941.4" width="11.2" height="11.2" fill="none" stroke="#e6d46e" stroke-width="1.1" stroke-dasharray="7 4.2" stroke-dashoffset="-2.1"/>
<rect x="648.4" y="940.6" width="1.6" height="1.6" fill="#e0e0e0" />
<rect x="648.4" y="951.8000000000001" width="1.6" height="1.6" fill="#e0e0e0" />
<rect x="659.6" y="940.6" width="1.6" height="1.6" fill="#e0e0e0" />
<rect x="659.6" y="951.8000000000001" width="1.6" height="1.6" fill="#e0e0e0" />
<polygon points="1140.9,946.9 1143.7,943.8 1147.3,943.8 1147.3,950.0 1143.7,950.0" fill="#d4b95e" />
<polygon points="1157.7,946.9 1154.9,943.8 1151.3,943.8 1151.3,950.0 1154.9,950.0" fill="#8a8a8a" />
<circle cx="1170" cy="946.9" r="4.3" fill="none" stroke="#828282" stroke-width="1" />
<line x1="634.5" y1="869" x2="634.5" y2="926" stroke="#c8c8c8" stroke-width="1" stroke-dasharray="1 1" shape-rendering="crispEdges"/>
<path d="M498.5 987.3 L502.1 983.3 H512.5 V991.3 H502.1 Z" fill="#e0e0e0" />
<circle cx="503.5" cy="987.3" r="1.6" fill="#2a2a2a" />
<rect x="988.5" y="981.5" width="11.0" height="11.0" fill="none" stroke="#d8d8d8" stroke-width="1.1" />
<circle cx="994" cy="987" r="1.8" fill="#e8e8e8" />
<line x1="1014.5" y1="982.5" x2="1026" y2="982.5" stroke="#2ecc71" stroke-width="1.7" />
<line x1="1017.5" y1="987" x2="1023.5" y2="987" stroke="#2ecc71" stroke-width="1.7" />
<line x1="1015.5" y1="991.5" x2="1025" y2="991.5" stroke="#2ecc71" stroke-width="1.7" />
<path d="M1104.5 981 V993 M1102 991.5 H1114" fill="none" stroke="#d0d0d0" stroke-width="1" />
<path d="M1105.5 990.5 L1113.5 984" fill="none" stroke="#d0d0d0" stroke-width="1" />
<rect x="1195.6" y="809" width="1.2" height="1.2" fill="#8a8a8a" />
<rect x="1195.6" y="812" width="1.2" height="1.2" fill="#8a8a8a" />
<rect x="1195.6" y="815" width="1.2" height="1.2" fill="#8a8a8a" />
<rect x="1195.6" y="818" width="1.2" height="1.2" fill="#8a8a8a" />
<rect x="1195.6" y="821" width="1.2" height="1.2" fill="#8a8a8a" />
<rect x="1195.6" y="824" width="1.2" height="1.2" fill="#8a8a8a" />
<line x1="1214.8" y1="650" x2="1214.8" y2="654" stroke="#9a9a9a" stroke-width="1" />
<line x1="1223.2" y1="650" x2="1223.2" y2="654" stroke="#9a9a9a" stroke-width="1" />
<line x1="1231.6" y1="650" x2="1231.6" y2="654" stroke="#9a9a9a" stroke-width="1" />
<line x1="1240.0" y1="650" x2="1240.0" y2="654" stroke="#9a9a9a" stroke-width="1" />
<line x1="1248.4" y1="645.5" x2="1248.4" y2="654" stroke="#9a9a9a" stroke-width="1" />
<line x1="1256.8" y1="650" x2="1256.8" y2="654" stroke="#9a9a9a" stroke-width="1" />
<line x1="1265.2" y1="650" x2="1265.2" y2="654" stroke="#9a9a9a" stroke-width="1" />
<line x1="1273.6" y1="650" x2="1273.6" y2="654" stroke="#9a9a9a" stroke-width="1" />
<line x1="1282.0" y1="650" x2="1282.0" y2="654" stroke="#9a9a9a" stroke-width="1" />
<line x1="1290.4" y1="645.5" x2="1290.4" y2="654" stroke="#9a9a9a" stroke-width="1" />
<line x1="1298.8" y1="650" x2="1298.8" y2="654" stroke="#9a9a9a" stroke-width="1" />
<line x1="1307.2" y1="650" x2="1307.2" y2="654" stroke="#9a9a9a" stroke-width="1" />
<line x1="1315.6" y1="650" x2="1315.6" y2="654" stroke="#9a9a9a" stroke-width="1" />
<line x1="1324.0" y1="650" x2="1324.0" y2="654" stroke="#9a9a9a" stroke-width="1" />
<line x1="1332.4" y1="645.5" x2="1332.4" y2="654" stroke="#9a9a9a" stroke-width="1" />
<line x1="1340.8" y1="650" x2="1340.8" y2="654" stroke="#9a9a9a" stroke-width="1" />
<line x1="1349.2" y1="650" x2="1349.2" y2="654" stroke="#9a9a9a" stroke-width="1" />
<line x1="1357.6" y1="650" x2="1357.6" y2="654" stroke="#9a9a9a" stroke-width="1" />
<line x1="1366.0" y1="650" x2="1366.0" y2="654" stroke="#9a9a9a" stroke-width="1" />
<line x1="1374.4" y1="645.5" x2="1374.4" y2="654" stroke="#9a9a9a" stroke-width="1" />
<line x1="1382.8" y1="650" x2="1382.8" y2="654" stroke="#9a9a9a" stroke-width="1" />
<line x1="1391.2" y1="650" x2="1391.2" y2="654" stroke="#9a9a9a" stroke-width="1" />
<line x1="1399.6" y1="650" x2="1399.6" y2="654" stroke="#9a9a9a" stroke-width="1" />
<line x1="1408.0" y1="650" x2="1408.0" y2="654" stroke="#9a9a9a" stroke-width="1" />
<line x1="1416.4" y1="645.5" x2="1416.4" y2="654" stroke="#9a9a9a" stroke-width="1" />
<line x1="1424.8" y1="650" x2="1424.8" y2="654" stroke="#9a9a9a" stroke-width="1" />
<line x1="1433.2" y1="650" x2="1433.2" y2="654" stroke="#9a9a9a" stroke-width="1" />
<line x1="1441.6" y1="650" x2="1441.6" y2="654" stroke="#9a9a9a" stroke-width="1" />
<line x1="1450.0" y1="650" x2="1450.0" y2="654" stroke="#9a9a9a" stroke-width="1" />
<line x1="1458.4" y1="645.5" x2="1458.4" y2="654" stroke="#9a9a9a" stroke-width="1" />
<line x1="1466.8" y1="650" x2="1466.8" y2="654" stroke="#9a9a9a" stroke-width="1" />
<line x1="1475.2" y1="650" x2="1475.2" y2="654" stroke="#9a9a9a" stroke-width="1" />
<line x1="1483.6" y1="650" x2="1483.6" y2="654" stroke="#9a9a9a" stroke-width="1" />
<line x1="1492.0" y1="650" x2="1492.0" y2="654" stroke="#9a9a9a" stroke-width="1" />
<line x1="1500.4" y1="645.5" x2="1500.4" y2="654" stroke="#9a9a9a" stroke-width="1" />
<line x1="1508.8" y1="650" x2="1508.8" y2="654" stroke="#9a9a9a" stroke-width="1" />
<line x1="1517.2" y1="650" x2="1517.2" y2="654" stroke="#9a9a9a" stroke-width="1" />
<line x1="1525.6" y1="650" x2="1525.6" y2="654" stroke="#9a9a9a" stroke-width="1" />
<line x1="1534.0" y1="650" x2="1534.0" y2="654" stroke="#9a9a9a" stroke-width="1" />
<line x1="1542.4" y1="645.5" x2="1542.4" y2="654" stroke="#9a9a9a" stroke-width="1" />
<line x1="1550.8" y1="650" x2="1550.8" y2="654" stroke="#9a9a9a" stroke-width="1" />
<line x1="1559.2" y1="650" x2="1559.2" y2="654" stroke="#9a9a9a" stroke-width="1" />
<line x1="1567.6" y1="650" x2="1567.6" y2="654" stroke="#9a9a9a" stroke-width="1" />
<line x1="1576.0" y1="650" x2="1576.0" y2="654" stroke="#9a9a9a" stroke-width="1" />
<line x1="1584.4" y1="645.5" x2="1584.4" y2="654" stroke="#9a9a9a" stroke-width="1" />
<line x1="1592.8" y1="650" x2="1592.8" y2="654" stroke="#9a9a9a" stroke-width="1" />
<line x1="1601.2" y1="650" x2="1601.2" y2="654" stroke="#9a9a9a" stroke-width="1" />
<line x1="1609.6" y1="650" x2="1609.6" y2="654" stroke="#9a9a9a" stroke-width="1" />
<line x1="1618.0" y1="650" x2="1618.0" y2="654" stroke="#9a9a9a" stroke-width="1" />
<line x1="1626.4" y1="645.5" x2="1626.4" y2="654" stroke="#9a9a9a" stroke-width="1" />
<line x1="1634.8" y1="650" x2="1634.8" y2="654" stroke="#9a9a9a" stroke-width="1" />
<line x1="1643.2" y1="650" x2="1643.2" y2="654" stroke="#9a9a9a" stroke-width="1" />
<line x1="1651.6" y1="650" x2="1651.6" y2="654" stroke="#9a9a9a" stroke-width="1" />
<line x1="1660.0" y1="650" x2="1660.0" y2="654" stroke="#9a9a9a" stroke-width="1" />
<line x1="1668.4" y1="645.5" x2="1668.4" y2="654" stroke="#9a9a9a" stroke-width="1" />
<line x1="1676.8" y1="650" x2="1676.8" y2="654" stroke="#9a9a9a" stroke-width="1" />
<line x1="1685.2" y1="650" x2="1685.2" y2="654" stroke="#9a9a9a" stroke-width="1" />
<line x1="1693.6" y1="650" x2="1693.6" y2="654" stroke="#9a9a9a" stroke-width="1" />
<line x1="1702.0" y1="650" x2="1702.0" y2="654" stroke="#9a9a9a" stroke-width="1" />
<line x1="1710.4" y1="645.5" x2="1710.4" y2="654" stroke="#9a9a9a" stroke-width="1" />
<line x1="1718.8" y1="650" x2="1718.8" y2="654" stroke="#9a9a9a" stroke-width="1" />
<line x1="1727.2" y1="650" x2="1727.2" y2="654" stroke="#9a9a9a" stroke-width="1" />
<line x1="1735.6" y1="650" x2="1735.6" y2="654" stroke="#9a9a9a" stroke-width="1" />
<line x1="1744.0" y1="650" x2="1744.0" y2="654" stroke="#9a9a9a" stroke-width="1" />
<line x1="1752.4" y1="645.5" x2="1752.4" y2="654" stroke="#9a9a9a" stroke-width="1" />
<line x1="1760.8" y1="650" x2="1760.8" y2="654" stroke="#9a9a9a" stroke-width="1" />
<line x1="1769.2" y1="650" x2="1769.2" y2="654" stroke="#9a9a9a" stroke-width="1" />
<line x1="1777.6" y1="650" x2="1777.6" y2="654" stroke="#9a9a9a" stroke-width="1" />
<line x1="1786.0" y1="650" x2="1786.0" y2="654" stroke="#9a9a9a" stroke-width="1" />
<line x1="1794.4" y1="645.5" x2="1794.4" y2="654" stroke="#9a9a9a" stroke-width="1" />
<line x1="1802.8" y1="650" x2="1802.8" y2="654" stroke="#9a9a9a" stroke-width="1" />
<line x1="1811.2" y1="650" x2="1811.2" y2="654" stroke="#9a9a9a" stroke-width="1" />
<line x1="1819.6" y1="650" x2="1819.6" y2="654" stroke="#9a9a9a" stroke-width="1" />
<line x1="1828.0" y1="650" x2="1828.0" y2="654" stroke="#9a9a9a" stroke-width="1" />
<line x1="1836.4" y1="645.5" x2="1836.4" y2="654" stroke="#9a9a9a" stroke-width="1" />
<line x1="1844.8" y1="650" x2="1844.8" y2="654" stroke="#9a9a9a" stroke-width="1" />
<line x1="1853.2" y1="650" x2="1853.2" y2="654" stroke="#9a9a9a" stroke-width="1" />
<line x1="1861.6" y1="650" x2="1861.6" y2="654" stroke="#9a9a9a" stroke-width="1" />
<line x1="1870.0" y1="650" x2="1870.0" y2="654" stroke="#9a9a9a" stroke-width="1" />
<line x1="1878.4" y1="645.5" x2="1878.4" y2="654" stroke="#9a9a9a" stroke-width="1" />
<line x1="1886.8" y1="650" x2="1886.8" y2="654" stroke="#9a9a9a" stroke-width="1" />
<line x1="1895.2" y1="650" x2="1895.2" y2="654" stroke="#9a9a9a" stroke-width="1" />
<line x1="1903.6" y1="650" x2="1903.6" y2="654" stroke="#9a9a9a" stroke-width="1" />
<line x1="1912.0" y1="650" x2="1912.0" y2="654" stroke="#9a9a9a" stroke-width="1" />
<polygon points="1199.8,643.2 1214.2,643.2 1207.8,652.5 1206,652.5" fill="#6cc5b0" />
<line x1="1211.8" y1="880" x2="1299.8" y2="880" stroke="#fde87c" stroke-width="1.8" />
<line x1="1309.8" y1="880" x2="1341.8" y2="880" stroke="#fde87c" stroke-width="1.8" />
<line x1="1351.8" y1="880" x2="1425.8" y2="880" stroke="#fde87c" stroke-width="1.8" />
<line x1="1440.8000000000002" y1="880" x2="1453.3000000000002" y2="880" stroke="#fde87c" stroke-width="1.8" stroke-dasharray="5 5"/>
<line x1="1463.8" y1="880" x2="1523.8" y2="880" stroke="#fde87c" stroke-width="1.8" />
<line x1="1538.8000000000002" y1="880" x2="1607.3000000000002" y2="880" stroke="#fde87c" stroke-width="1.8" stroke-dasharray="5 5"/>
<line x1="1617.8" y1="880" x2="1899.0" y2="880" stroke="#fde87c" stroke-width="1.8" />
<polygon points="1202.6,880 1206.8,875.8 1211.0,880 1206.8,884.2" fill="#c8c8c8" />
<polygon points="1300.6,880 1304.8,875.8 1309.0,880 1304.8,884.2" fill="#c8c8c8" />
<polygon points="1342.6,880 1346.8,875.8 1351.0,880 1346.8,884.2" fill="#c8c8c8" />
<polygon points="1426.6,880 1430.8,875.8 1435.0,880 1430.8,884.2" fill="#c8c8c8" />
<polygon points="1454.6,880 1458.8,875.8 1463.0,880 1458.8,884.2" fill="#c8c8c8" />
<polygon points="1524.6,880 1528.8,875.8 1533.0,880 1528.8,884.2" fill="#c8c8c8" />
<polygon points="1608.6,880 1612.8,875.8 1617.0,880 1612.8,884.2" fill="#c8c8c8" />
<polygon points="1899.8,880 1904.0,875.8 1908.2,880 1904.0,884.2" fill="#c8c8c8" />
<line x1="1234.2" y1="902" x2="1285.8" y2="902" stroke="#fde87c" stroke-width="1.8" />
<line x1="1295.8" y1="902" x2="1358.6" y2="902" stroke="#fde87c" stroke-width="1.8" />
<line x1="1373.6000000000001" y1="902" x2="1402.9" y2="902" stroke="#fde87c" stroke-width="1.8" stroke-dasharray="5 5"/>
<line x1="1413.4" y1="902" x2="1467.8" y2="902" stroke="#fde87c" stroke-width="1.8" />
<line x1="1477.8" y1="902" x2="1537.8" y2="902" stroke="#fde87c" stroke-width="1.8" />
<line x1="1547.8" y1="902" x2="1621.8" y2="902" stroke="#fde87c" stroke-width="1.8" />
<polygon points="1225.0,902 1229.2,897.8 1233.4,902 1229.2,906.2" fill="#c8c8c8" />
<polygon points="1286.6,902 1290.8,897.8 1295.0,902 1290.8,906.2" fill="#c8c8c8" />
<polygon points="1359.4,902 1363.6,897.8 1367.8,902 1363.6,906.2" fill="#c8c8c8" />
<polygon points="1404.2,902 1408.4,897.8 1412.6,902 1408.4,906.2" fill="#c8c8c8" />
<polygon points="1468.6,902 1472.8,897.8 1477.0,902 1472.8,906.2" fill="#c8c8c8" />
<polygon points="1538.6,902 1542.8,897.8 1547.0,902 1542.8,906.2" fill="#c8c8c8" />
<polygon points="1622.6,902 1626.8,897.8 1631.0,902 1626.8,906.2" fill="#c8c8c8" />
<line x1="1267.8" y1="924" x2="1313.8" y2="924" stroke="#fde87c" stroke-width="1.8" />
<line x1="1323.8" y1="924" x2="1341.8" y2="924" stroke="#fde87c" stroke-width="1.8" />
<line x1="1356.8000000000002" y1="924" x2="1402.9" y2="924" stroke="#fde87c" stroke-width="1.8" stroke-dasharray="5 5"/>
<line x1="1413.4" y1="924" x2="1509.8" y2="924" stroke="#fde87c" stroke-width="1.8" />
<line x1="1519.8" y1="924" x2="1621.8" y2="924" stroke="#fde87c" stroke-width="1.8" />
<polygon points="1258.6,924 1262.8,919.8 1267.0,924 1262.8,928.2" fill="#c8c8c8" />
<polygon points="1314.6,924 1318.8,919.8 1323.0,924 1318.8,928.2" fill="#c8c8c8" />
<polygon points="1342.6,924 1346.8,919.8 1351.0,924 1346.8,928.2" fill="#c8c8c8" />
<polygon points="1404.2,924 1408.4,919.8 1412.6,924 1408.4,928.2" fill="#c8c8c8" />
<polygon points="1510.6,924 1514.8,919.8 1519.0,924 1514.8,928.2" fill="#c8c8c8" />
<polygon points="1622.6,924 1626.8,919.8 1631.0,924 1626.8,928.2" fill="#c8c8c8" />
<line x1="1205" y1="981.5" x2="1218.5" y2="981.5" stroke="#e4e4e4" stroke-width="1.5" />
<line x1="1205" y1="986" x2="1218.5" y2="986" stroke="#e4e4e4" stroke-width="1.5" />
<line x1="1205" y1="990.8" x2="1215" y2="990.8" stroke="#e4e4e4" stroke-width="1.5" stroke-dasharray="3.5 1.5 2 1.5"/>
<polygon points="1219.5,995 1219.5,992.5 1217,995" fill="#4fc7a0" />
<line x1="1496.5" y1="981" x2="1496.5" y2="993" stroke="#e0e0e0" stroke-width="1" />
<rect x="1498.5" y="983" width="2.0" height="2" fill="#6cc5b0" />
<line x1="1501.5" y1="984" x2="1505.5" y2="984" stroke="#e0e0e0" stroke-width="1.5" />
<rect x="1498.5" y="989" width="2.0" height="2" fill="#6cc5b0" />
<line x1="1501.5" y1="990" x2="1508.5" y2="990" stroke="#e0e0e0" stroke-width="1.5" />
<line x1="1510.5" y1="979" x2="1510.5" y2="995" stroke="#3a3a3a" stroke-width="1" />
<line x1="1528" y1="979" x2="1528" y2="995" stroke="#3a3a3a" stroke-width="1" />
<line x1="1519.3" y1="980.5" x2="1519.3" y2="993.5" stroke="#e0e0e0" stroke-width="1" />
<rect x="1518.3" y="983" width="2.0" height="2" fill="#6cc5b0" />
<line x1="1513.5" y1="984" x2="1517" y2="984" stroke="#e0e0e0" stroke-width="1.5" />
<line x1="1521.5" y1="984" x2="1525" y2="984" stroke="#e0e0e0" stroke-width="1.5" />
<rect x="1518.3" y="989" width="2.0" height="2" fill="#6cc5b0" />
<line x1="1513.5" y1="990" x2="1517" y2="990" stroke="#e0e0e0" stroke-width="1.5" />
<line x1="1521.5" y1="990" x2="1525" y2="990" stroke="#e0e0e0" stroke-width="1.5" />
<line x1="1541.5" y1="981" x2="1541.5" y2="993" stroke="#e0e0e0" stroke-width="1" />
<rect x="1537.5" y="983" width="2.0" height="2" fill="#6cc5b0" />
<line x1="1533" y1="984" x2="1536.5" y2="984" stroke="#e0e0e0" stroke-width="1.5" />
<rect x="1537.5" y="989" width="2.0" height="2" fill="#6cc5b0" />
<line x1="1530.5" y1="990" x2="1536.5" y2="990" stroke="#e0e0e0" stroke-width="1.5" />
<rect x="1552" y="981.2" width="11.5" height="11.5" fill="none" stroke="#c8c8c8" stroke-width="1.1" stroke-dasharray="7.5 4" stroke-dashoffset="-2"/>
<rect x="1551" y="980.2" width="2" height="2.0" fill="#d8d8d8" />
<rect x="1551" y="991.7" width="2" height="2.0" fill="#d8d8d8" />
<rect x="1562.5" y="980.2" width="2.0" height="2.0" fill="#d8d8d8" />
<rect x="1562.5" y="991.7" width="2.0" height="2.0" fill="#d8d8d8" />
<rect x="1556.8" y="986" width="2.0" height="2" fill="#e0e0e0" />
<line x1="1588.5" y1="978.5" x2="1588.5" y2="995" stroke="#3a3a3a" stroke-width="1" />
<path d="M1574 985 A4 4 0 0 1 1581 982.3 L1584.6 987 M1574 985 L1577 991.5" fill="none" stroke="#e0e0e0" stroke-width="2.1" />
<path d="M1592.5 983.8 L1597 987 L1592.5 990.2 Z" fill="none" stroke="#8a8a8a" stroke-width="0.9" />
<line x1="1623.8" y1="978.5" x2="1623.8" y2="995" stroke="#3a3a3a" stroke-width="1" />
<line x1="1608" y1="987" x2="1610.5" y2="987" stroke="#c8c8c8" stroke-width="1" />
<line x1="1612" y1="981" x2="1612" y2="993" stroke="#c8c8c8" stroke-width="1" />
<line x1="1615" y1="984.5" x2="1615" y2="989.5" stroke="#c8c8c8" stroke-width="1" />
<line x1="1616.5" y1="987" x2="1621.5" y2="987" stroke="#c8c8c8" stroke-width="1" />
<path d="M1628 983.8 L1632.5 987 L1628 990.2 Z" fill="none" stroke="#8a8a8a" stroke-width="0.9" />
<circle cx="1749.5" cy="986.5" r="4.6" fill="none" stroke="#c0c0c0" stroke-width="1" />
<line x1="1747.3" y1="986.5" x2="1751.7" y2="986.5" stroke="#c0c0c0" stroke-width="1" />
<line x1="1753" y1="990" x2="1755.5" y2="992.5" stroke="#c0c0c0" stroke-width="1.5" />
<circle cx="1767.3" cy="986.8" r="4.8" fill="#6cc5b0" />
<circle cx="1767.3" cy="986.8" r="2" fill="#4fae98" />
<circle cx="1893.5" cy="986.5" r="4.6" fill="none" stroke="#c0c0c0" stroke-width="1" />
<line x1="1891.3" y1="986.5" x2="1895.7" y2="986.5" stroke="#c0c0c0" stroke-width="1" />
<line x1="1893.5" y1="984.3" x2="1893.5" y2="988.7" stroke="#c0c0c0" stroke-width="1" />
<line x1="1897" y1="990" x2="1899.5" y2="992.5" stroke="#c0c0c0" stroke-width="1.5" />
<rect x="498.3" y="1009.4" width="1.7" height="1.8" fill="#8a8a8a" />
<rect x="498.3" y="1013.4" width="1.7" height="1.8" fill="#8a8a8a" />
<rect x="498.3" y="1017.4" width="1.7" height="1.8" fill="#8a8a8a" />
<path d="M508.5 1007.5 H521.5 V1017.5 H519 V1020.5 L516 1017.5 H508.5 Z" fill="#e4e4e4" />
<line x1="510.5" y1="1010" x2="519.5" y2="1010" stroke="#2a2a2a" stroke-width="1" />
<line x1="510.5" y1="1012.5" x2="519.5" y2="1012.5" stroke="#2a2a2a" stroke-width="1" />
<line x1="510.5" y1="1015" x2="519.5" y2="1015" stroke="#2a2a2a" stroke-width="1" />
<polygon points="523,1022 523,1019.7 520.7,1022" fill="#4fc7a0" />
<circle cx="557" cy="1014.5" r="2.6" fill="#2ecc71" />
<rect x="1539.5" y="1009.5" width="7.5" height="10.5" fill="#f4f4f4" rx="0.6" />
<line x1="1541.0" y1="1012" x2="1545.5" y2="1012" stroke="#b8b8b8" stroke-width="0.8" />
<line x1="1541.0" y1="1014" x2="1545.5" y2="1014" stroke="#b8b8b8" stroke-width="0.8" />
<line x1="1541.0" y1="1016" x2="1545.5" y2="1016" stroke="#b8b8b8" stroke-width="0.8" />
<g transform="translate(1546.0 1016) rotate(40)"><rect x="-1.2" y="-5" width="2.4" height="8" fill="#f0a030"/><path d="M-1.2 3 H1.2 L0 5.5 Z" fill="#f0d0a0"/><rect x="-1.2" y="-6" width="2.4" height="1.6" fill="#e86060"/></g>
<g fill="#f6c63c"><rect x="1649.5" y="1012.5" width="5" height="8" rx="2"/><rect x="1656.5" y="1012.5" width="5" height="8" rx="2"/><rect x="1650.0" y="1010" width="1.5" height="4" rx="0.7"/><rect x="1652.2" y="1009.4" width="1.5" height="4" rx="0.7"/><rect x="1657.3" y="1009.4" width="1.5" height="4" rx="0.7"/><rect x="1659.5" y="1010" width="1.5" height="4" rx="0.7"/></g>
<circle cx="1788.5" cy="1015.5" r="5.3" fill="#f6c63c" />
<polygon points="1783.5,1012.5 1787.5,1008 1790.0,1011.5" fill="#d050c8" />
<path d="M1786.0 1015 q1.2 -1.4 2.4 0 M1789.3 1015 q1.2 -1.4 2.4 0" fill="none" stroke="#6a4a10" stroke-width="0.8" />
<circle cx="1793.0" cy="1017.5" r="1.4" fill="#e05050" />
<rect x="1792.5" y="1009" width="1.4" height="1.4" fill="#50b0f0" />
<rect x="1782.0" y="1018" width="1.4" height="1.4" fill="#50d080" />
<g transform="translate(1897.5 1015) rotate(45)"><path d="M0 -7 Q3 -3.5 2.4 2.5 H-2.4 Q-3 -3.5 0 -7 Z" fill="#e8e8f0"/><path d="M0 -7 Q1.6 -5.4 2 -3.6 H-2 Q-1.6 -5.4 0 -7 Z" fill="#e04a4a"/><path d="M-2.4 0 L-4.6 3.6 L-2.4 2.6 Z M2.4 0 L4.6 3.6 L2.4 2.6 Z" fill="#e04a4a"/><circle cy="-1.2" r="1.1" fill="#5aa8e8"/><path d="M-1.4 2.8 L0 6.5 L1.4 2.8 Z" fill="#f8a030"/></g>
</svg>
<svg class="ov" viewBox="0 0 1920 1030" width="1920" height="1030">
<rect x="165.5" y="547.6" width="114" height="46.8" fill="none" stroke="#b5e61d" stroke-width="3"/>
<rect x="640.3" y="670.5" width="278.5" height="26.8" fill="none" stroke="#b5e61d" stroke-width="3"/>
<path d="M221 509.5 C260 524 300 535 322 546 C332 551 337.5 554.5 338 558 C337.5 562 330 565.5 320 568.8 C300 574 275 579 252.5 583.6" fill="none" stroke="#b5e61d" stroke-width="2.8" stroke-linecap="round"/>
<path d="M348.7 554.5 H360.5 V565.3 H363.8 L354.6 575.4 L345.4 565.3 H348.7 Z" fill="none" stroke="#b5e61d" stroke-width="2.8" stroke-linejoin="miter"/>
</svg>
</div></body></html>
